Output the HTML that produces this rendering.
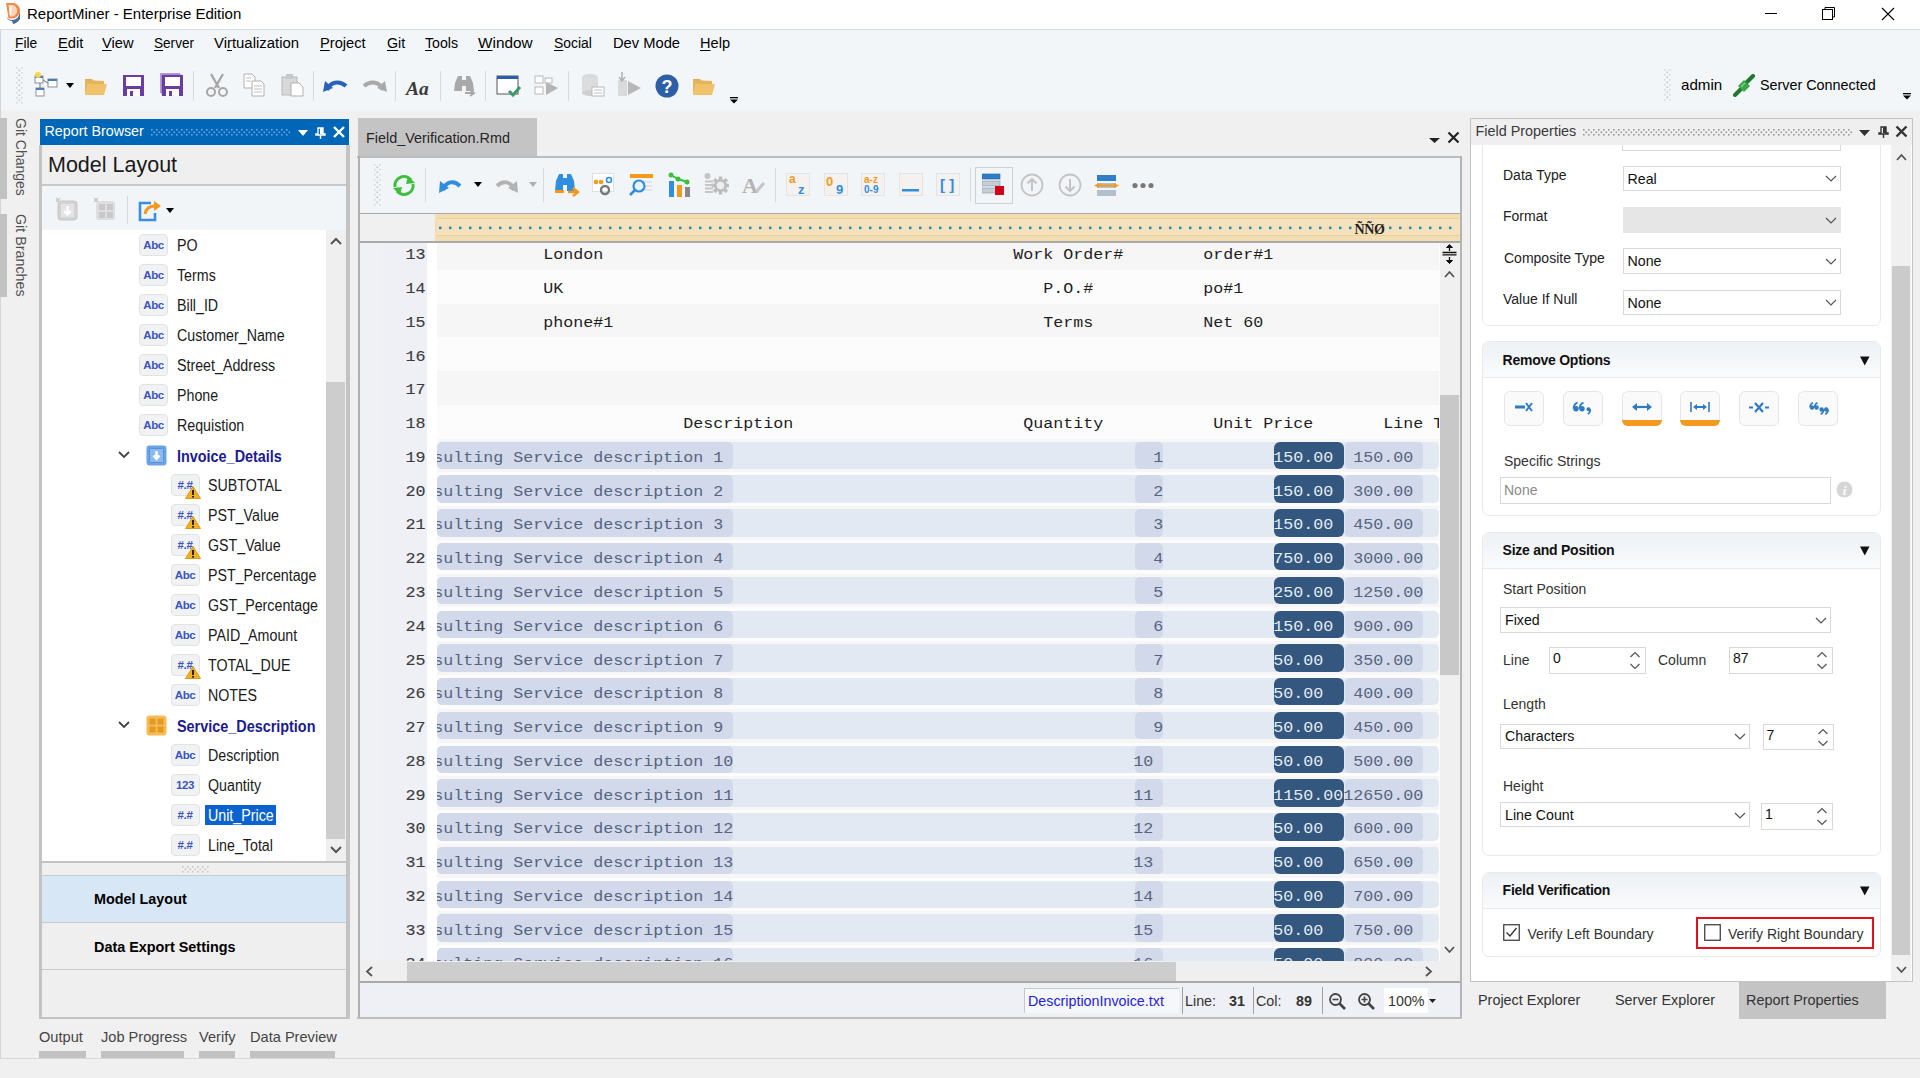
<!DOCTYPE html><html><head><meta charset="utf-8"><style>
html,body{margin:0;padding:0;}
body{width:1920px;height:1078px;overflow:hidden;position:relative;background:#f0f0f0;font-family:'Liberation Sans',sans-serif;}
body div{position:absolute;box-sizing:border-box;}
u{text-decoration:underline;text-underline-offset:2px;}
</style></head><body>
<div style="left:0px;top:0px;width:1920px;height:29px;background:#ffffff;"></div>
<div style="left:0px;top:29px;width:1920px;height:1px;background:#d8dce1;"></div>
<svg style="position:absolute;left:4px;top:2px;" width="16" height="22" viewBox="0 0 16 22"><path d="M2.5 14 C3 18 8 19 12 17 C15 15 16 12 15 8 L17 9 C18 14 16 19 11 21.5 L9 22 L8 19 C5 18.5 2.5 17 2.5 14 Z" fill="#2f5d92" opacity="0.9"/><path d="M2 1 L10 1 C14 2 16.5 6 16 10 C15 13 13 15.5 9.5 16.5 L4.5 16.5 Z" fill="#f0894a"/><path d="M4.5 3 L9.5 3 C12 4 13.5 7 13 10 C12.5 12 11 14 9 14.5 L6 14.5 Z" fill="#fbd3b8"/><path d="M5 4 L8 4 L7 13 L5.5 13 Z" fill="#ffffff" opacity="0.8"/></svg>
<div style="left:27px;top:6.34px;font-family:'Liberation Sans', sans-serif;font-size:15px;line-height:15px;color:#000;font-weight:normal;white-space:pre;">ReportMiner - Enterprise Edition</div>
<div style="left:1765px;top:13px;width:12px;height:1px;background:#000;"></div>
<svg style="position:absolute;left:1822px;top:7px;" width="14" height="14" viewBox="0 0 14 14"><rect x="0.5" y="2.5" width="10" height="10" fill="none" stroke="#000"/><path d="M3 2.5 V0.5 H12.5 V10 H10.5" fill="none" stroke="#000"/></svg>
<svg style="position:absolute;left:1881px;top:7px;" width="14" height="14" viewBox="0 0 14 14"><path d="M1 1 L13 13 M13 1 L1 13" stroke="#000" stroke-width="1.1"/></svg>
<div style="left:0px;top:30px;width:1920px;height:80px;background:#f2f6f9;"></div>
<div style="left:0px;top:110px;width:1920px;height:8px;background:#f0f0f0;"></div>
<div style="left:15px;top:36.23px;font-family:'Liberation Sans', sans-serif;font-size:14.9px;line-height:14.9px;color:#000;font-weight:normal;white-space:pre;transform:scaleX(0.927);transform-origin:0 0;"><u>F</u>ile</div>
<div style="left:57.5px;top:36.23px;font-family:'Liberation Sans', sans-serif;font-size:14.9px;line-height:14.9px;color:#000;font-weight:normal;white-space:pre;transform:scaleX(0.985);transform-origin:0 0;"><u>E</u>dit</div>
<div style="left:102px;top:36.23px;font-family:'Liberation Sans', sans-serif;font-size:14.9px;line-height:14.9px;color:#000;font-weight:normal;white-space:pre;transform:scaleX(0.984);transform-origin:0 0;"><u>V</u>iew</div>
<div style="left:153.5px;top:36.23px;font-family:'Liberation Sans', sans-serif;font-size:14.9px;line-height:14.9px;color:#000;font-weight:normal;white-space:pre;transform:scaleX(0.912);transform-origin:0 0;"><u>S</u>erver</div>
<div style="left:214px;top:36.23px;font-family:'Liberation Sans', sans-serif;font-size:14.9px;line-height:14.9px;color:#000;font-weight:normal;white-space:pre;transform:scaleX(1.0);transform-origin:0 0;">Vi<u>r</u>tualization</div>
<div style="left:320.4px;top:36.23px;font-family:'Liberation Sans', sans-serif;font-size:14.9px;line-height:14.9px;color:#000;font-weight:normal;white-space:pre;transform:scaleX(0.983);transform-origin:0 0;"><u>P</u>roject</div>
<div style="left:386.5px;top:36.23px;font-family:'Liberation Sans', sans-serif;font-size:14.9px;line-height:14.9px;color:#000;font-weight:normal;white-space:pre;transform:scaleX(0.956);transform-origin:0 0;"><u>G</u>it</div>
<div style="left:425px;top:36.23px;font-family:'Liberation Sans', sans-serif;font-size:14.9px;line-height:14.9px;color:#000;font-weight:normal;white-space:pre;transform:scaleX(0.949);transform-origin:0 0;"><u>T</u>ools</div>
<div style="left:478.4px;top:36.23px;font-family:'Liberation Sans', sans-serif;font-size:14.9px;line-height:14.9px;color:#000;font-weight:normal;white-space:pre;transform:scaleX(1.03);transform-origin:0 0;"><u>W</u>indow</div>
<div style="left:553.8px;top:36.23px;font-family:'Liberation Sans', sans-serif;font-size:14.9px;line-height:14.9px;color:#000;font-weight:normal;white-space:pre;transform:scaleX(0.934);transform-origin:0 0;"><u>S</u>ocial</div>
<div style="left:612.5px;top:36.23px;font-family:'Liberation Sans', sans-serif;font-size:14.9px;line-height:14.9px;color:#000;font-weight:normal;white-space:pre;transform:scaleX(0.987);transform-origin:0 0;">Dev Mode</div>
<div style="left:700px;top:36.23px;font-family:'Liberation Sans', sans-serif;font-size:14.9px;line-height:14.9px;color:#000;font-weight:normal;white-space:pre;transform:scaleX(0.979);transform-origin:0 0;"><u>H</u>elp</div>
<svg style="position:absolute;left:16.3px;top:66.6px;" width="7" height="37" viewBox="0 0 7 37"><rect x="0" y="0" width="1.6" height="1.6" fill="#d6d9dc"/><rect x="5" y="0" width="1.6" height="1.6" fill="#d6d9dc"/><rect x="0" y="5" width="1.6" height="1.6" fill="#d6d9dc"/><rect x="5" y="5" width="1.6" height="1.6" fill="#d6d9dc"/><rect x="0" y="10" width="1.6" height="1.6" fill="#d6d9dc"/><rect x="5" y="10" width="1.6" height="1.6" fill="#d6d9dc"/><rect x="0" y="15" width="1.6" height="1.6" fill="#d6d9dc"/><rect x="5" y="15" width="1.6" height="1.6" fill="#d6d9dc"/><rect x="0" y="20" width="1.6" height="1.6" fill="#d6d9dc"/><rect x="5" y="20" width="1.6" height="1.6" fill="#d6d9dc"/><rect x="0" y="25" width="1.6" height="1.6" fill="#d6d9dc"/><rect x="5" y="25" width="1.6" height="1.6" fill="#d6d9dc"/><rect x="0" y="30" width="1.6" height="1.6" fill="#d6d9dc"/><rect x="5" y="30" width="1.6" height="1.6" fill="#d6d9dc"/><rect x="0" y="35" width="1.6" height="1.6" fill="#d6d9dc"/><rect x="5" y="35" width="1.6" height="1.6" fill="#d6d9dc"/><rect x="2.5" y="2.5" width="1.6" height="1.6" fill="#c2c5c8"/><rect x="2.5" y="7.5" width="1.6" height="1.6" fill="#c2c5c8"/><rect x="2.5" y="12.5" width="1.6" height="1.6" fill="#c2c5c8"/><rect x="2.5" y="17.5" width="1.6" height="1.6" fill="#c2c5c8"/><rect x="2.5" y="22.5" width="1.6" height="1.6" fill="#c2c5c8"/><rect x="2.5" y="27.5" width="1.6" height="1.6" fill="#c2c5c8"/><rect x="2.5" y="32.5" width="1.6" height="1.6" fill="#c2c5c8"/></svg>
<svg style="position:absolute;left:34px;top:72px;" width="24" height="25" viewBox="0 0 24 25"><rect x="1" y="4" width="8" height="7" fill="#fff" stroke="#8a9099"/><rect x="1" y="4" width="8" height="2" fill="#4a7cc0"/>
<circle cx="4" cy="3" r="3" fill="#f6d64a"/>
<rect x="14" y="7" width="9" height="8" fill="#fff" stroke="#8a9099"/><rect x="14" y="7" width="9" height="2" fill="#4a7cc0"/>
<rect x="2" y="16" width="8" height="8" fill="#fff" stroke="#8a9099"/><rect x="2" y="16" width="8" height="2" fill="#4a7cc0"/>
<path d="M9 8 L14 11 M6 11 V16" stroke="#6a7078" fill="none"/></svg>
<svg style="position:absolute;left:66px;top:83px;" width="9" height="6" viewBox="0 0 9 6"><path d="M0 0 H8 L4 5 Z" fill="#000"/></svg>
<svg style="position:absolute;left:84px;top:75px;" width="24" height="22" viewBox="0 0 24 22"><path d="M1 4 H8 L10 6 H20 V9 H1 Z" fill="#e2ad52"/><path d="M1 20 L4 9 H23 L20 20 Z" fill="#f0c26a"/><path d="M1 5 V20 L4 9 H20 V6" fill="#e6b45c"/></svg>
<svg style="position:absolute;left:122px;top:74px;" width="23" height="23" viewBox="0 0 23 23"><path d="M1 1 H22 V22 H1 Z" fill="#6a3ea1"/><rect x="4" y="3" width="15" height="9" fill="#fff"/><rect x="5" y="15" width="13" height="7" fill="#fff"/><rect x="8" y="17" width="3" height="5" fill="#6a3ea1"/></svg>
<svg style="position:absolute;left:160px;top:73px;" width="24" height="24" viewBox="0 0 24 24"><rect x="0" y="0" width="20" height="20" fill="#b59ad6"/><rect x="1.5" y="1.5" width="20" height="20" fill="#9a78c8"/></svg>
<svg style="position:absolute;left:161px;top:74px;" width="23" height="23" viewBox="0 0 23 23"><path d="M1 1 H22 V22 H1 Z" fill="#6a3ea1"/><rect x="4" y="3" width="15" height="9" fill="#fff"/><rect x="5" y="15" width="13" height="7" fill="#fff"/><rect x="8" y="17" width="3" height="5" fill="#6a3ea1"/></svg>
<div style="left:193px;top:71px;width:1px;height:30px;background:#d6d9dd;"></div>
<svg style="position:absolute;left:205px;top:73px;" width="24" height="24" viewBox="0 0 24 24"><path d="M6 1 L14 15 M18 1 L10 15" stroke="#a7a7a7" stroke-width="2.4"/><circle cx="6" cy="19" r="4" fill="none" stroke="#a7a7a7" stroke-width="2"/><circle cx="18" cy="19" r="4" fill="none" stroke="#a7a7a7" stroke-width="2"/></svg>
<svg style="position:absolute;left:243px;top:73px;" width="23" height="24" viewBox="0 0 23 24"><path d="M1 1 H9 L12 4 V15 H1 Z" fill="#fff" stroke="#b0b0b0"/><path d="M9 8 H18 L21 11 V23 H9 Z" fill="#fff" stroke="#b0b0b0"/><path d="M11 13 H19 M11 16 H19 M11 19 H19 M3 5 H8 M3 8 H8" stroke="#c0c0c0"/></svg>
<svg style="position:absolute;left:281px;top:73px;" width="23" height="24" viewBox="0 0 23 24"><rect x="1" y="4" width="15" height="18" fill="#d8d8d8" stroke="#b8b8b8"/><rect x="5" y="1" width="7" height="5" fill="#c8c8c8"/><path d="M10 10 H18 L22 14 V23 H10 Z" fill="#fff" stroke="#b0b0b0"/></svg>
<div style="left:313px;top:71px;width:1px;height:30px;background:#d6d9dd;"></div>
<svg style="position:absolute;left:323px;top:76px;" width="25" height="18" viewBox="0 0 25 18"><path d="M4 14 C7 6 16 4 23 10" stroke="#2a62b8" stroke-width="4.2" fill="none"/><path d="M0 16 L2 5 L10 12 Z" fill="#2a62b8"/></svg>
<svg style="position:absolute;left:362px;top:76px;" width="25" height="18" viewBox="0 0 25 18"><path d="M21 14 C18 6 9 4 2 10" stroke="#a9a9a9" stroke-width="4.2" fill="none"/><path d="M25 16 L23 5 L15 12 Z" fill="#a9a9a9"/></svg>
<div style="left:395px;top:71px;width:1px;height:30px;background:#d6d9dd;"></div>
<div style="left:406px;top:79.32px;font-family:'Liberation Serif', serif;font-size:19.5px;line-height:19.5px;color:#3a3a3a;font-weight:bold;white-space:pre;font-style:italic;">Aa</div>
<div style="left:440px;top:71px;width:1px;height:30px;background:#d6d9dd;"></div>
<svg style="position:absolute;left:453px;top:75px;" width="24" height="22" viewBox="0 0 24 22"><path d="M2 8 L5 1 H9 V16 H1 Z M13 1 H17 L20 8 L21 16 H13 Z" fill="#a9a9a9"/><rect x="8" y="5" width="6" height="6" fill="#a9a9a9"/><path d="M12 18 H20 M17 15 L21 18 L17 21" stroke="#a9a9a9" stroke-width="2" fill="none"/></svg>
<div style="left:485px;top:71px;width:1px;height:30px;background:#d6d9dd;"></div>
<svg style="position:absolute;left:496px;top:74px;" width="26" height="24" viewBox="0 0 26 24"><rect x="1" y="2" width="21" height="18" fill="#fff" stroke="#555"/><rect x="1" y="2" width="21" height="3" fill="#2a5eaa"/><path d="M13 17 L17 21 L24 13" stroke="#3a9a6a" stroke-width="3" fill="none"/></svg>
<svg style="position:absolute;left:534px;top:74px;" width="25" height="23" viewBox="0 0 25 23"><rect x="1" y="2" width="8" height="7" fill="#fff" stroke="#b8b8b8"/><rect x="1" y="13" width="8" height="7" fill="#fff" stroke="#b8b8b8"/><rect x="11" y="4" width="7" height="5" fill="#fff" stroke="#b8b8b8"/><path d="M12 8 L24 14 L12 21 Z" fill="#b5b5b5"/></svg>
<div style="left:568px;top:71px;width:1px;height:30px;background:#d6d9dd;"></div>
<svg style="position:absolute;left:581px;top:73px;" width="24" height="25" viewBox="0 0 24 25"><ellipse cx="9" cy="4" rx="8" ry="3" fill="#d8d8d8"/><rect x="1" y="4" width="16" height="16" fill="#dcdcdc"/><ellipse cx="9" cy="20" rx="8" ry="3" fill="#d0d0d0"/><rect x="11" y="14" width="12" height="9" fill="#fff" stroke="#b8b8b8"/><path d="M13 17 H21 M13 20 H21" stroke="#c0c0c0"/></svg>
<svg style="position:absolute;left:617px;top:72px;" width="25" height="25" viewBox="0 0 25 25"><rect x="1" y="8" width="9" height="16" fill="#dadada"/><path d="M5 0 V8 M2 5 L5 9 L8 5" stroke="#b0b0b0" stroke-width="1.5" fill="none"/><path d="M11 9 L24 16 L11 23 Z" fill="#b8b8b8"/></svg>
<svg style="position:absolute;left:655px;top:74px;" width="24" height="24" viewBox="0 0 24 24"><circle cx="12" cy="12" r="11.5" fill="#2c5fa6"/><text x="12" y="18.5" text-anchor="middle" font-family="Liberation Sans" font-weight="bold" font-size="18" fill="#fff">?</text></svg>
<svg style="position:absolute;left:692px;top:75px;" width="24" height="22" viewBox="0 0 24 22"><path d="M1 4 H8 L10 6 H20 V9 H1 Z" fill="#e2ad52"/><path d="M1 20 L4 9 H23 L20 20 Z" fill="#f0c26a"/><path d="M1 5 V20 L4 9 H20 V6" fill="#e6b45c"/></svg>
<svg style="position:absolute;left:730px;top:97px;" width="9" height="7" viewBox="0 0 9 7"><rect x="0" y="0" width="8" height="1.3" fill="#000"/><path d="M0 2.5 H8 L4 6.5 Z" fill="#000"/></svg>
<svg style="position:absolute;left:1664px;top:69px;" width="7" height="34" viewBox="0 0 7 34"><rect x="0" y="0" width="1.6" height="1.6" fill="#d6d9dc"/><rect x="5" y="0" width="1.6" height="1.6" fill="#d6d9dc"/><rect x="0" y="5" width="1.6" height="1.6" fill="#d6d9dc"/><rect x="5" y="5" width="1.6" height="1.6" fill="#d6d9dc"/><rect x="0" y="10" width="1.6" height="1.6" fill="#d6d9dc"/><rect x="5" y="10" width="1.6" height="1.6" fill="#d6d9dc"/><rect x="0" y="15" width="1.6" height="1.6" fill="#d6d9dc"/><rect x="5" y="15" width="1.6" height="1.6" fill="#d6d9dc"/><rect x="0" y="20" width="1.6" height="1.6" fill="#d6d9dc"/><rect x="5" y="20" width="1.6" height="1.6" fill="#d6d9dc"/><rect x="0" y="25" width="1.6" height="1.6" fill="#d6d9dc"/><rect x="5" y="25" width="1.6" height="1.6" fill="#d6d9dc"/><rect x="0" y="30" width="1.6" height="1.6" fill="#d6d9dc"/><rect x="5" y="30" width="1.6" height="1.6" fill="#d6d9dc"/><rect x="2.5" y="2.5" width="1.6" height="1.6" fill="#c2c5c8"/><rect x="2.5" y="7.5" width="1.6" height="1.6" fill="#c2c5c8"/><rect x="2.5" y="12.5" width="1.6" height="1.6" fill="#c2c5c8"/><rect x="2.5" y="17.5" width="1.6" height="1.6" fill="#c2c5c8"/><rect x="2.5" y="22.5" width="1.6" height="1.6" fill="#c2c5c8"/><rect x="2.5" y="27.5" width="1.6" height="1.6" fill="#c2c5c8"/></svg>
<div style="left:1680.5px;top:78.34px;font-family:'Liberation Sans', sans-serif;font-size:14.3px;line-height:14.3px;color:#000;font-weight:normal;white-space:pre;transform:scaleX(1.06);transform-origin:0 0;">admin</div>
<svg style="position:absolute;left:1732px;top:74px;" width="24" height="23" viewBox="0 0 24 23"><path d="M3 21 L9 15" stroke="#1f7a30" stroke-width="4" stroke-linecap="round"/><path d="M15 8 L21 2" stroke="#1f7a30" stroke-width="4" stroke-linecap="round"/><path d="M6 12 L12 6 L18 12 L12 18 Z" fill="#3aa64a"/><path d="M9 13 L13 9" stroke="#7ed07e" stroke-width="1.5"/></svg>
<div style="left:1760px;top:78.30px;font-family:'Liberation Sans', sans-serif;font-size:14.35px;line-height:14.35px;color:#000;font-weight:normal;white-space:pre;">Server Connected</div>
<svg style="position:absolute;left:1903px;top:93px;" width="9" height="8" viewBox="0 0 9 8"><rect x="0" y="0" width="8" height="1.3" fill="#000"/><path d="M0 2.5 H8 L4 6.5 Z" fill="#000"/></svg>
<div style="left:0px;top:30px;width:1px;height:1028px;background:#d4d4d4;"></div>
<div style="left:0px;top:118px;width:7px;height:81px;background:#c2c2c2;"></div>
<div style="left:0px;top:214px;width:7px;height:83px;background:#c2c2c2;"></div>
<div style="left:13px;top:118px;width:16px;height:80px;"><div style="left:0;top:0;width:80px;height:16px;transform-origin:0 0;transform:translate(16px,0) rotate(90deg);font-size:14px;line-height:16px;color:#505050;white-space:pre;">Git Changes</div></div>
<div style="left:13px;top:214px;width:16px;height:84px;"><div style="left:0;top:0;width:84px;height:16px;transform-origin:0 0;transform:translate(16px,0) rotate(90deg);font-size:14.3px;line-height:16px;color:#505050;white-space:pre;">Git Branches</div></div>
<div style="left:39px;top:145px;width:311px;height:874px;background:#efefef;border:2px solid #c3c3c3;border-left-width:3px;border-right-width:4px;border-top:none;"></div>
<div style="left:40px;top:119px;width:309px;height:26px;background:#0067b8;"></div>
<div style="left:44.5px;top:124.14px;font-family:'Liberation Sans', sans-serif;font-size:14.3px;line-height:14.3px;color:#ffffff;font-weight:normal;white-space:pre;">Report Browser</div>
<svg style="position:absolute;left:151px;top:129px;" width="140" height="8" viewBox="0 0 140 8"><rect x="0" y="0.0" width="1.6" height="1.6" fill="#6aa6dc"/><rect x="5" y="0.0" width="1.6" height="1.6" fill="#6aa6dc"/><rect x="10" y="0.0" width="1.6" height="1.6" fill="#6aa6dc"/><rect x="15" y="0.0" width="1.6" height="1.6" fill="#6aa6dc"/><rect x="20" y="0.0" width="1.6" height="1.6" fill="#6aa6dc"/><rect x="25" y="0.0" width="1.6" height="1.6" fill="#6aa6dc"/><rect x="30" y="0.0" width="1.6" height="1.6" fill="#6aa6dc"/><rect x="35" y="0.0" width="1.6" height="1.6" fill="#6aa6dc"/><rect x="40" y="0.0" width="1.6" height="1.6" fill="#6aa6dc"/><rect x="45" y="0.0" width="1.6" height="1.6" fill="#6aa6dc"/><rect x="50" y="0.0" width="1.6" height="1.6" fill="#6aa6dc"/><rect x="55" y="0.0" width="1.6" height="1.6" fill="#6aa6dc"/><rect x="60" y="0.0" width="1.6" height="1.6" fill="#6aa6dc"/><rect x="65" y="0.0" width="1.6" height="1.6" fill="#6aa6dc"/><rect x="70" y="0.0" width="1.6" height="1.6" fill="#6aa6dc"/><rect x="75" y="0.0" width="1.6" height="1.6" fill="#6aa6dc"/><rect x="80" y="0.0" width="1.6" height="1.6" fill="#6aa6dc"/><rect x="85" y="0.0" width="1.6" height="1.6" fill="#6aa6dc"/><rect x="90" y="0.0" width="1.6" height="1.6" fill="#6aa6dc"/><rect x="95" y="0.0" width="1.6" height="1.6" fill="#6aa6dc"/><rect x="100" y="0.0" width="1.6" height="1.6" fill="#6aa6dc"/><rect x="105" y="0.0" width="1.6" height="1.6" fill="#6aa6dc"/><rect x="110" y="0.0" width="1.6" height="1.6" fill="#6aa6dc"/><rect x="115" y="0.0" width="1.6" height="1.6" fill="#6aa6dc"/><rect x="120" y="0.0" width="1.6" height="1.6" fill="#6aa6dc"/><rect x="125" y="0.0" width="1.6" height="1.6" fill="#6aa6dc"/><rect x="130" y="0.0" width="1.6" height="1.6" fill="#6aa6dc"/><rect x="135" y="0.0" width="1.6" height="1.6" fill="#6aa6dc"/><rect x="2.5" y="2.5" width="1.6" height="1.6" fill="#6aa6dc"/><rect x="7.5" y="2.5" width="1.6" height="1.6" fill="#6aa6dc"/><rect x="12.5" y="2.5" width="1.6" height="1.6" fill="#6aa6dc"/><rect x="17.5" y="2.5" width="1.6" height="1.6" fill="#6aa6dc"/><rect x="22.5" y="2.5" width="1.6" height="1.6" fill="#6aa6dc"/><rect x="27.5" y="2.5" width="1.6" height="1.6" fill="#6aa6dc"/><rect x="32.5" y="2.5" width="1.6" height="1.6" fill="#6aa6dc"/><rect x="37.5" y="2.5" width="1.6" height="1.6" fill="#6aa6dc"/><rect x="42.5" y="2.5" width="1.6" height="1.6" fill="#6aa6dc"/><rect x="47.5" y="2.5" width="1.6" height="1.6" fill="#6aa6dc"/><rect x="52.5" y="2.5" width="1.6" height="1.6" fill="#6aa6dc"/><rect x="57.5" y="2.5" width="1.6" height="1.6" fill="#6aa6dc"/><rect x="62.5" y="2.5" width="1.6" height="1.6" fill="#6aa6dc"/><rect x="67.5" y="2.5" width="1.6" height="1.6" fill="#6aa6dc"/><rect x="72.5" y="2.5" width="1.6" height="1.6" fill="#6aa6dc"/><rect x="77.5" y="2.5" width="1.6" height="1.6" fill="#6aa6dc"/><rect x="82.5" y="2.5" width="1.6" height="1.6" fill="#6aa6dc"/><rect x="87.5" y="2.5" width="1.6" height="1.6" fill="#6aa6dc"/><rect x="92.5" y="2.5" width="1.6" height="1.6" fill="#6aa6dc"/><rect x="97.5" y="2.5" width="1.6" height="1.6" fill="#6aa6dc"/><rect x="102.5" y="2.5" width="1.6" height="1.6" fill="#6aa6dc"/><rect x="107.5" y="2.5" width="1.6" height="1.6" fill="#6aa6dc"/><rect x="112.5" y="2.5" width="1.6" height="1.6" fill="#6aa6dc"/><rect x="117.5" y="2.5" width="1.6" height="1.6" fill="#6aa6dc"/><rect x="122.5" y="2.5" width="1.6" height="1.6" fill="#6aa6dc"/><rect x="127.5" y="2.5" width="1.6" height="1.6" fill="#6aa6dc"/><rect x="132.5" y="2.5" width="1.6" height="1.6" fill="#6aa6dc"/><rect x="137.5" y="2.5" width="1.6" height="1.6" fill="#6aa6dc"/><rect x="0" y="5.0" width="1.6" height="1.6" fill="#6aa6dc"/><rect x="5" y="5.0" width="1.6" height="1.6" fill="#6aa6dc"/><rect x="10" y="5.0" width="1.6" height="1.6" fill="#6aa6dc"/><rect x="15" y="5.0" width="1.6" height="1.6" fill="#6aa6dc"/><rect x="20" y="5.0" width="1.6" height="1.6" fill="#6aa6dc"/><rect x="25" y="5.0" width="1.6" height="1.6" fill="#6aa6dc"/><rect x="30" y="5.0" width="1.6" height="1.6" fill="#6aa6dc"/><rect x="35" y="5.0" width="1.6" height="1.6" fill="#6aa6dc"/><rect x="40" y="5.0" width="1.6" height="1.6" fill="#6aa6dc"/><rect x="45" y="5.0" width="1.6" height="1.6" fill="#6aa6dc"/><rect x="50" y="5.0" width="1.6" height="1.6" fill="#6aa6dc"/><rect x="55" y="5.0" width="1.6" height="1.6" fill="#6aa6dc"/><rect x="60" y="5.0" width="1.6" height="1.6" fill="#6aa6dc"/><rect x="65" y="5.0" width="1.6" height="1.6" fill="#6aa6dc"/><rect x="70" y="5.0" width="1.6" height="1.6" fill="#6aa6dc"/><rect x="75" y="5.0" width="1.6" height="1.6" fill="#6aa6dc"/><rect x="80" y="5.0" width="1.6" height="1.6" fill="#6aa6dc"/><rect x="85" y="5.0" width="1.6" height="1.6" fill="#6aa6dc"/><rect x="90" y="5.0" width="1.6" height="1.6" fill="#6aa6dc"/><rect x="95" y="5.0" width="1.6" height="1.6" fill="#6aa6dc"/><rect x="100" y="5.0" width="1.6" height="1.6" fill="#6aa6dc"/><rect x="105" y="5.0" width="1.6" height="1.6" fill="#6aa6dc"/><rect x="110" y="5.0" width="1.6" height="1.6" fill="#6aa6dc"/><rect x="115" y="5.0" width="1.6" height="1.6" fill="#6aa6dc"/><rect x="120" y="5.0" width="1.6" height="1.6" fill="#6aa6dc"/><rect x="125" y="5.0" width="1.6" height="1.6" fill="#6aa6dc"/><rect x="130" y="5.0" width="1.6" height="1.6" fill="#6aa6dc"/><rect x="135" y="5.0" width="1.6" height="1.6" fill="#6aa6dc"/></svg>
<svg style="position:absolute;left:298px;top:130px;" width="11" height="7" viewBox="0 0 11 7"><path d="M0 0 H10 L5 6 Z" fill="#fff"/></svg>
<svg style="position:absolute;left:315px;top:127px;" width="11" height="13" viewBox="0 0 11 13"><path d="M3 1 H8 V7 H10 V8 H1 V7 H3 Z M5.5 8 V12" stroke="#fff" stroke-width="1.4" fill="none"/><rect x="5" y="1" width="3" height="6" fill="#fff"/></svg>
<svg style="position:absolute;left:333px;top:126px;" width="12" height="12" viewBox="0 0 12 12"><path d="M1 1 L11 11 M11 1 L1 11" stroke="#fff" stroke-width="2.4"/></svg>
<div style="left:48px;top:154.57px;font-family:'Liberation Sans', sans-serif;font-size:21.5px;line-height:21.5px;color:#1a1a1a;font-weight:normal;white-space:pre;">Model Layout</div>
<div style="left:42px;top:184px;width:304px;height:2px;background:#c9c9c9;"></div>
<div style="left:42px;top:186px;width:304px;height:44px;background:#f2f5f8;"></div>
<svg style="position:absolute;left:55px;top:197px;" width="24" height="25" viewBox="0 0 24 25"><rect x="3" y="4" width="19" height="19" rx="3" fill="#d4d4d4" stroke="#c4c4c4"/><rect x="6" y="7" width="13" height="13" fill="#e4e4e4"/><path d="M12.5 9 V17 M9 14 L12.5 17.5 L16 14" stroke="#fff" stroke-width="2.2" fill="none"/><path d="M1 1 L5 5 M5 1 L1 5" stroke="#c8c8c8" stroke-width="1.5"/></svg>
<svg style="position:absolute;left:93px;top:197px;" width="24" height="25" viewBox="0 0 24 25"><rect x="3" y="4" width="19" height="19" rx="3" fill="#dedede"/><rect x="6" y="7" width="6" height="6" fill="#c9c9c9"/><rect x="14" y="7" width="6" height="6" fill="#c9c9c9"/><rect x="6" y="15" width="6" height="6" fill="#c9c9c9"/><rect x="14" y="15" width="6" height="6" fill="#c9c9c9"/><path d="M1 1 L5 5 M5 1 L1 5" stroke="#c8c8c8" stroke-width="1.5"/></svg>
<div style="left:127px;top:196px;width:1px;height:28px;background:#d8d8d8;"></div>
<svg style="position:absolute;left:138px;top:199px;" width="24" height="23" viewBox="0 0 24 23"><path d="M13 4 H2 V21 H17 V14" stroke="#3a8de0" stroke-width="2.6" fill="none"/><path d="M7 15 C8 9 12 7 17 7" stroke="#f39a1e" stroke-width="3" fill="none"/><path d="M16 2 L23 7 L16 12 Z" fill="#f39a1e"/></svg>
<svg style="position:absolute;left:166px;top:208px;" width="9" height="6" viewBox="0 0 9 6"><path d="M0 0 H8 L4 5 Z" fill="#000"/></svg>
<div style="left:42px;top:230px;width:284px;height:631px;background:#ffffff;"></div>
<div style="left:326px;top:230px;width:20px;height:631px;background:#efefef;"></div>
<div style="left:326px;top:382px;width:19px;height:457px;background:#cdcdcd;"></div>
<svg style="position:absolute;left:330px;top:237px;" width="12" height="8" viewBox="0 0 12 8"><path d="M1 7 L6 2 L11 7" stroke="#555" stroke-width="2" fill="none"/></svg>
<svg style="position:absolute;left:330px;top:846px;" width="12" height="8" viewBox="0 0 12 8"><path d="M1 1 L6 6 L11 1" stroke="#555" stroke-width="2" fill="none"/></svg>
<div style="left:42px;top:861px;width:304px;height:2px;background:#c3c3c3;"></div>
<svg style="position:absolute;left:182px;top:866px;" width="29" height="8" viewBox="0 0 29 8"><rect x="0" y="0.0" width="1.6" height="1.6" fill="#c8c8c8"/><rect x="5" y="0.0" width="1.6" height="1.6" fill="#c8c8c8"/><rect x="10" y="0.0" width="1.6" height="1.6" fill="#c8c8c8"/><rect x="15" y="0.0" width="1.6" height="1.6" fill="#c8c8c8"/><rect x="20" y="0.0" width="1.6" height="1.6" fill="#c8c8c8"/><rect x="25" y="0.0" width="1.6" height="1.6" fill="#c8c8c8"/><rect x="2.5" y="2.5" width="1.6" height="1.6" fill="#c8c8c8"/><rect x="7.5" y="2.5" width="1.6" height="1.6" fill="#c8c8c8"/><rect x="12.5" y="2.5" width="1.6" height="1.6" fill="#c8c8c8"/><rect x="17.5" y="2.5" width="1.6" height="1.6" fill="#c8c8c8"/><rect x="22.5" y="2.5" width="1.6" height="1.6" fill="#c8c8c8"/><rect x="0" y="5.0" width="1.6" height="1.6" fill="#c8c8c8"/><rect x="5" y="5.0" width="1.6" height="1.6" fill="#c8c8c8"/><rect x="10" y="5.0" width="1.6" height="1.6" fill="#c8c8c8"/><rect x="15" y="5.0" width="1.6" height="1.6" fill="#c8c8c8"/><rect x="20" y="5.0" width="1.6" height="1.6" fill="#c8c8c8"/><rect x="25" y="5.0" width="1.6" height="1.6" fill="#c8c8c8"/></svg>
<div style="left:42px;top:875px;width:304px;height:1px;background:#cbcbcb;"></div>
<div style="left:42px;top:876px;width:304px;height:46px;background:#d7e7f6;"></div>
<div style="left:42px;top:922px;width:304px;height:1px;background:#c9c9c9;"></div>
<div style="left:94px;top:892.16px;font-family:'Liberation Sans', sans-serif;font-size:14.4px;line-height:14.4px;color:#000;font-weight:bold;white-space:pre;">Model Layout</div>
<div style="left:42px;top:969px;width:304px;height:1px;background:#c9c9c9;"></div>
<div style="left:94px;top:939.66px;font-family:'Liberation Sans', sans-serif;font-size:14.4px;line-height:14.4px;color:#000;font-weight:bold;white-space:pre;">Data Export Settings</div>
<div style="left:139px;top:234.39999999999998px;width:29px;height:22px;border-radius:4px;background:#f1f2f4;border:1px solid #e1e3e6;"></div>
<div style="left:139px;top:237.39999999999998px;width:29px;height:16px;font-size:11.5px;line-height:16px;font-weight:bold;color:#3b55bd;text-align:center;letter-spacing:-0.4px;">Abc</div>
<div style="left:176.5px;top:238.49px;font-family:'Liberation Sans', sans-serif;font-size:16px;line-height:16px;color:#1a1a1a;font-weight:normal;white-space:pre;transform:scaleX(0.89);transform-origin:0 0;">PO</div>
<div style="left:139px;top:264.4px;width:29px;height:22px;border-radius:4px;background:#f1f2f4;border:1px solid #e1e3e6;"></div>
<div style="left:139px;top:267.4px;width:29px;height:16px;font-size:11.5px;line-height:16px;font-weight:bold;color:#3b55bd;text-align:center;letter-spacing:-0.4px;">Abc</div>
<div style="left:176.5px;top:268.49px;font-family:'Liberation Sans', sans-serif;font-size:16px;line-height:16px;color:#1a1a1a;font-weight:normal;white-space:pre;transform:scaleX(0.89);transform-origin:0 0;">Terms</div>
<div style="left:139px;top:294.4px;width:29px;height:22px;border-radius:4px;background:#f1f2f4;border:1px solid #e1e3e6;"></div>
<div style="left:139px;top:297.4px;width:29px;height:16px;font-size:11.5px;line-height:16px;font-weight:bold;color:#3b55bd;text-align:center;letter-spacing:-0.4px;">Abc</div>
<div style="left:176.5px;top:298.49px;font-family:'Liberation Sans', sans-serif;font-size:16px;line-height:16px;color:#1a1a1a;font-weight:normal;white-space:pre;transform:scaleX(0.89);transform-origin:0 0;">Bill_ID</div>
<div style="left:139px;top:324.4px;width:29px;height:22px;border-radius:4px;background:#f1f2f4;border:1px solid #e1e3e6;"></div>
<div style="left:139px;top:327.4px;width:29px;height:16px;font-size:11.5px;line-height:16px;font-weight:bold;color:#3b55bd;text-align:center;letter-spacing:-0.4px;">Abc</div>
<div style="left:176.5px;top:328.49px;font-family:'Liberation Sans', sans-serif;font-size:16px;line-height:16px;color:#1a1a1a;font-weight:normal;white-space:pre;transform:scaleX(0.89);transform-origin:0 0;">Customer_Name</div>
<div style="left:139px;top:354.4px;width:29px;height:22px;border-radius:4px;background:#f1f2f4;border:1px solid #e1e3e6;"></div>
<div style="left:139px;top:357.4px;width:29px;height:16px;font-size:11.5px;line-height:16px;font-weight:bold;color:#3b55bd;text-align:center;letter-spacing:-0.4px;">Abc</div>
<div style="left:176.5px;top:358.49px;font-family:'Liberation Sans', sans-serif;font-size:16px;line-height:16px;color:#1a1a1a;font-weight:normal;white-space:pre;transform:scaleX(0.89);transform-origin:0 0;">Street_Address</div>
<div style="left:139px;top:384.4px;width:29px;height:22px;border-radius:4px;background:#f1f2f4;border:1px solid #e1e3e6;"></div>
<div style="left:139px;top:387.4px;width:29px;height:16px;font-size:11.5px;line-height:16px;font-weight:bold;color:#3b55bd;text-align:center;letter-spacing:-0.4px;">Abc</div>
<div style="left:176.5px;top:388.49px;font-family:'Liberation Sans', sans-serif;font-size:16px;line-height:16px;color:#1a1a1a;font-weight:normal;white-space:pre;transform:scaleX(0.89);transform-origin:0 0;">Phone</div>
<div style="left:139px;top:414.4px;width:29px;height:22px;border-radius:4px;background:#f1f2f4;border:1px solid #e1e3e6;"></div>
<div style="left:139px;top:417.4px;width:29px;height:16px;font-size:11.5px;line-height:16px;font-weight:bold;color:#3b55bd;text-align:center;letter-spacing:-0.4px;">Abc</div>
<div style="left:176.5px;top:418.49px;font-family:'Liberation Sans', sans-serif;font-size:16px;line-height:16px;color:#1a1a1a;font-weight:normal;white-space:pre;transform:scaleX(0.89);transform-origin:0 0;">Requistion</div>
<svg style="position:absolute;left:118px;top:451.2px;" width="12" height="8" viewBox="0 0 12 8"><path d="M1 1 L6 6 L11 1" stroke="#444" stroke-width="1.8" fill="none"/></svg>
<svg style="position:absolute;left:146px;top:445.2px;" width="21" height="21" viewBox="0 0 21 21"><rect x="0.5" y="0.5" width="20" height="20" rx="3" fill="#6ba4e6"/><rect x="3.5" y="3.5" width="14" height="14" rx="1" fill="#8bbaf0" stroke="#5a90d4"/><path d="M10.5 6 V13 M7.5 10.5 L10.5 14 L13.5 10.5" stroke="#fff" stroke-width="2.4" fill="none"/></svg>
<div style="left:176.75px;top:448.59px;font-family:'Liberation Sans', sans-serif;font-size:16px;line-height:16px;color:#1b1b8e;font-weight:bold;white-space:pre;transform:scaleX(0.9);transform-origin:0 0;">Invoice_Details</div>
<div style="left:170.5px;top:474.4px;width:29px;height:22px;border-radius:4px;background:#f1f2f4;border:1px solid #e1e3e6;"></div>
<div style="left:170.5px;top:477.4px;width:29px;height:16px;font-size:11.5px;line-height:16px;font-weight:bold;color:#3b55bd;text-align:center;letter-spacing:-0.4px;">#.#</div>
<svg style="position:absolute;left:184.5px;top:486.4px;" width="16" height="13" viewBox="0 0 16 13"><path d="M8 0.5 L15.5 12.5 H0.5 Z" fill="#f3b11c" stroke="#d08a00" stroke-width="0.8"/><rect x="7" y="4" width="2" height="5" fill="#222"/><rect x="7" y="10" width="2" height="1.6" fill="#222"/></svg>
<div style="left:207.5px;top:478.49px;font-family:'Liberation Sans', sans-serif;font-size:16px;line-height:16px;color:#1a1a1a;font-weight:normal;white-space:pre;transform:scaleX(0.89);transform-origin:0 0;">SUBTOTAL</div>
<div style="left:170.5px;top:504.40000000000003px;width:29px;height:22px;border-radius:4px;background:#f1f2f4;border:1px solid #e1e3e6;"></div>
<div style="left:170.5px;top:507.40000000000003px;width:29px;height:16px;font-size:11.5px;line-height:16px;font-weight:bold;color:#3b55bd;text-align:center;letter-spacing:-0.4px;">#.#</div>
<svg style="position:absolute;left:184.5px;top:516.4000000000001px;" width="16" height="13" viewBox="0 0 16 13"><path d="M8 0.5 L15.5 12.5 H0.5 Z" fill="#f3b11c" stroke="#d08a00" stroke-width="0.8"/><rect x="7" y="4" width="2" height="5" fill="#222"/><rect x="7" y="10" width="2" height="1.6" fill="#222"/></svg>
<div style="left:207.5px;top:508.49px;font-family:'Liberation Sans', sans-serif;font-size:16px;line-height:16px;color:#1a1a1a;font-weight:normal;white-space:pre;transform:scaleX(0.89);transform-origin:0 0;">PST_Value</div>
<div style="left:170.5px;top:534.4000000000001px;width:29px;height:22px;border-radius:4px;background:#f1f2f4;border:1px solid #e1e3e6;"></div>
<div style="left:170.5px;top:537.4000000000001px;width:29px;height:16px;font-size:11.5px;line-height:16px;font-weight:bold;color:#3b55bd;text-align:center;letter-spacing:-0.4px;">#.#</div>
<svg style="position:absolute;left:184.5px;top:546.4000000000001px;" width="16" height="13" viewBox="0 0 16 13"><path d="M8 0.5 L15.5 12.5 H0.5 Z" fill="#f3b11c" stroke="#d08a00" stroke-width="0.8"/><rect x="7" y="4" width="2" height="5" fill="#222"/><rect x="7" y="10" width="2" height="1.6" fill="#222"/></svg>
<div style="left:207.5px;top:538.49px;font-family:'Liberation Sans', sans-serif;font-size:16px;line-height:16px;color:#1a1a1a;font-weight:normal;white-space:pre;transform:scaleX(0.89);transform-origin:0 0;">GST_Value</div>
<div style="left:170.5px;top:564.4000000000001px;width:29px;height:22px;border-radius:4px;background:#f1f2f4;border:1px solid #e1e3e6;"></div>
<div style="left:170.5px;top:567.4000000000001px;width:29px;height:16px;font-size:11.5px;line-height:16px;font-weight:bold;color:#3b55bd;text-align:center;letter-spacing:-0.4px;">Abc</div>
<div style="left:207.5px;top:568.49px;font-family:'Liberation Sans', sans-serif;font-size:16px;line-height:16px;color:#1a1a1a;font-weight:normal;white-space:pre;transform:scaleX(0.89);transform-origin:0 0;">PST_Percentage</div>
<div style="left:170.5px;top:594.4000000000001px;width:29px;height:22px;border-radius:4px;background:#f1f2f4;border:1px solid #e1e3e6;"></div>
<div style="left:170.5px;top:597.4000000000001px;width:29px;height:16px;font-size:11.5px;line-height:16px;font-weight:bold;color:#3b55bd;text-align:center;letter-spacing:-0.4px;">Abc</div>
<div style="left:207.5px;top:598.49px;font-family:'Liberation Sans', sans-serif;font-size:16px;line-height:16px;color:#1a1a1a;font-weight:normal;white-space:pre;transform:scaleX(0.89);transform-origin:0 0;">GST_Percentage</div>
<div style="left:170.5px;top:624.4000000000001px;width:29px;height:22px;border-radius:4px;background:#f1f2f4;border:1px solid #e1e3e6;"></div>
<div style="left:170.5px;top:627.4000000000001px;width:29px;height:16px;font-size:11.5px;line-height:16px;font-weight:bold;color:#3b55bd;text-align:center;letter-spacing:-0.4px;">Abc</div>
<div style="left:207.5px;top:628.49px;font-family:'Liberation Sans', sans-serif;font-size:16px;line-height:16px;color:#1a1a1a;font-weight:normal;white-space:pre;transform:scaleX(0.89);transform-origin:0 0;">PAID_Amount</div>
<div style="left:170.5px;top:654.4000000000001px;width:29px;height:22px;border-radius:4px;background:#f1f2f4;border:1px solid #e1e3e6;"></div>
<div style="left:170.5px;top:657.4000000000001px;width:29px;height:16px;font-size:11.5px;line-height:16px;font-weight:bold;color:#3b55bd;text-align:center;letter-spacing:-0.4px;">#.#</div>
<svg style="position:absolute;left:184.5px;top:666.4000000000001px;" width="16" height="13" viewBox="0 0 16 13"><path d="M8 0.5 L15.5 12.5 H0.5 Z" fill="#f3b11c" stroke="#d08a00" stroke-width="0.8"/><rect x="7" y="4" width="2" height="5" fill="#222"/><rect x="7" y="10" width="2" height="1.6" fill="#222"/></svg>
<div style="left:207.5px;top:658.49px;font-family:'Liberation Sans', sans-serif;font-size:16px;line-height:16px;color:#1a1a1a;font-weight:normal;white-space:pre;transform:scaleX(0.89);transform-origin:0 0;">TOTAL_DUE</div>
<div style="left:170.5px;top:684.4000000000001px;width:29px;height:22px;border-radius:4px;background:#f1f2f4;border:1px solid #e1e3e6;"></div>
<div style="left:170.5px;top:687.4000000000001px;width:29px;height:16px;font-size:11.5px;line-height:16px;font-weight:bold;color:#3b55bd;text-align:center;letter-spacing:-0.4px;">Abc</div>
<div style="left:207.5px;top:688.49px;font-family:'Liberation Sans', sans-serif;font-size:16px;line-height:16px;color:#1a1a1a;font-weight:normal;white-space:pre;transform:scaleX(0.89);transform-origin:0 0;">NOTES</div>
<svg style="position:absolute;left:118px;top:721.2px;" width="12" height="8" viewBox="0 0 12 8"><path d="M1 1 L6 6 L11 1" stroke="#444" stroke-width="1.8" fill="none"/></svg>
<svg style="position:absolute;left:146px;top:715.2px;" width="21" height="21" viewBox="0 0 21 21"><rect x="0.5" y="0.5" width="20" height="20" rx="3" fill="#f5bb55"/><rect x="3.5" y="3.5" width="6" height="6" fill="#e39a22"/><rect x="11.5" y="3.5" width="6" height="6" fill="#e39a22"/><rect x="3.5" y="11.5" width="6" height="6" fill="#e39a22"/><rect x="11.5" y="11.5" width="6" height="6" fill="#e39a22"/></svg>
<div style="left:176.75px;top:718.59px;font-family:'Liberation Sans', sans-serif;font-size:16px;line-height:16px;color:#1b1b8e;font-weight:bold;white-space:pre;transform:scaleX(0.9);transform-origin:0 0;">Service_Description</div>
<div style="left:170.5px;top:744.4000000000001px;width:29px;height:22px;border-radius:4px;background:#f1f2f4;border:1px solid #e1e3e6;"></div>
<div style="left:170.5px;top:747.4000000000001px;width:29px;height:16px;font-size:11.5px;line-height:16px;font-weight:bold;color:#3b55bd;text-align:center;letter-spacing:-0.4px;">Abc</div>
<div style="left:207.5px;top:748.49px;font-family:'Liberation Sans', sans-serif;font-size:16px;line-height:16px;color:#1a1a1a;font-weight:normal;white-space:pre;transform:scaleX(0.89);transform-origin:0 0;">Description</div>
<div style="left:170.5px;top:774.4000000000001px;width:29px;height:22px;border-radius:4px;background:#f1f2f4;border:1px solid #e1e3e6;"></div>
<div style="left:170.5px;top:777.4000000000001px;width:29px;height:16px;font-size:11.5px;line-height:16px;font-weight:bold;color:#3b55bd;text-align:center;letter-spacing:-0.4px;">123</div>
<div style="left:207.5px;top:778.49px;font-family:'Liberation Sans', sans-serif;font-size:16px;line-height:16px;color:#1a1a1a;font-weight:normal;white-space:pre;transform:scaleX(0.89);transform-origin:0 0;">Quantity</div>
<div style="left:170.5px;top:804.4000000000001px;width:29px;height:22px;border-radius:4px;background:#f1f2f4;border:1px solid #e1e3e6;"></div>
<div style="left:170.5px;top:807.4000000000001px;width:29px;height:16px;font-size:11.5px;line-height:16px;font-weight:bold;color:#3b55bd;text-align:center;letter-spacing:-0.4px;">#.#</div>
<div style="left:205px;top:805.2px;width:71px;height:20px;background:#0a63d0;"></div>
<div style="left:207.5px;top:808.49px;font-family:'Liberation Sans', sans-serif;font-size:16px;line-height:16px;color:#ffffff;font-weight:normal;white-space:pre;transform:scaleX(0.89);transform-origin:0 0;">Unit_Price</div>
<div style="left:170.5px;top:834.4000000000001px;width:29px;height:22px;border-radius:4px;background:#f1f2f4;border:1px solid #e1e3e6;"></div>
<div style="left:170.5px;top:837.4000000000001px;width:29px;height:16px;font-size:11.5px;line-height:16px;font-weight:bold;color:#3b55bd;text-align:center;letter-spacing:-0.4px;">#.#</div>
<div style="left:207.5px;top:838.49px;font-family:'Liberation Sans', sans-serif;font-size:16px;line-height:16px;color:#1a1a1a;font-weight:normal;white-space:pre;transform:scaleX(0.89);transform-origin:0 0;">Line_Total</div>
<div style="left:358px;top:118px;width:179px;height:38px;background:#c4c4c4;"></div>
<div style="left:365.5px;top:129.50px;font-family:'Liberation Sans', sans-serif;font-size:15.4px;line-height:15.4px;color:#262626;font-weight:normal;white-space:pre;transform:scaleX(0.935);transform-origin:0 0;">Field_Verification.Rmd</div>
<svg style="position:absolute;left:1429px;top:138px;" width="12" height="6" viewBox="0 0 12 6"><path d="M0 0 H11 L5.5 5 Z" fill="#222"/></svg>
<svg style="position:absolute;left:1447px;top:131px;" width="13" height="13" viewBox="0 0 13 13"><path d="M1.5 1.5 L11.5 11.5 M11.5 1.5 L1.5 11.5" stroke="#222" stroke-width="2.2"/></svg>
<div style="left:357px;top:156px;width:105px;height:1px;background:#b9b9b9;"></div>
<div style="left:357px;top:156px;width:1105px;height:2px;background:#bdbdbd;"></div>
<div style="left:358px;top:156px;width:2px;height:863px;background:#b0b0b0;"></div>
<div style="left:1460px;top:156px;width:2px;height:863px;background:#b4b4b4;"></div>
<div style="left:357px;top:1017px;width:1105px;height:2px;background:#bdbdbd;"></div>
<div style="left:360px;top:158px;width:1100px;height:55px;background:#f2f5f8;"></div>
<div style="left:360px;top:213px;width:1100px;height:1px;background:#a8a8a8;"></div>
<svg style="position:absolute;left:374px;top:164px;" width="7" height="44" viewBox="0 0 7 44"><rect x="0" y="0" width="1.6" height="1.6" fill="#d6d9dc"/><rect x="5" y="0" width="1.6" height="1.6" fill="#d6d9dc"/><rect x="0" y="5" width="1.6" height="1.6" fill="#d6d9dc"/><rect x="5" y="5" width="1.6" height="1.6" fill="#d6d9dc"/><rect x="0" y="10" width="1.6" height="1.6" fill="#d6d9dc"/><rect x="5" y="10" width="1.6" height="1.6" fill="#d6d9dc"/><rect x="0" y="15" width="1.6" height="1.6" fill="#d6d9dc"/><rect x="5" y="15" width="1.6" height="1.6" fill="#d6d9dc"/><rect x="0" y="20" width="1.6" height="1.6" fill="#d6d9dc"/><rect x="5" y="20" width="1.6" height="1.6" fill="#d6d9dc"/><rect x="0" y="25" width="1.6" height="1.6" fill="#d6d9dc"/><rect x="5" y="25" width="1.6" height="1.6" fill="#d6d9dc"/><rect x="0" y="30" width="1.6" height="1.6" fill="#d6d9dc"/><rect x="5" y="30" width="1.6" height="1.6" fill="#d6d9dc"/><rect x="0" y="35" width="1.6" height="1.6" fill="#d6d9dc"/><rect x="5" y="35" width="1.6" height="1.6" fill="#d6d9dc"/><rect x="0" y="40" width="1.6" height="1.6" fill="#d6d9dc"/><rect x="5" y="40" width="1.6" height="1.6" fill="#d6d9dc"/><rect x="2.5" y="2.5" width="1.6" height="1.6" fill="#c2c5c8"/><rect x="2.5" y="7.5" width="1.6" height="1.6" fill="#c2c5c8"/><rect x="2.5" y="12.5" width="1.6" height="1.6" fill="#c2c5c8"/><rect x="2.5" y="17.5" width="1.6" height="1.6" fill="#c2c5c8"/><rect x="2.5" y="22.5" width="1.6" height="1.6" fill="#c2c5c8"/><rect x="2.5" y="27.5" width="1.6" height="1.6" fill="#c2c5c8"/><rect x="2.5" y="32.5" width="1.6" height="1.6" fill="#c2c5c8"/><rect x="2.5" y="37.5" width="1.6" height="1.6" fill="#c2c5c8"/></svg>
<svg style="position:absolute;left:391px;top:174px;" width="26" height="23" viewBox="0 0 26 23"><path d="M4 13 A9 9 0 0 1 20 6" stroke="#3cbf3c" stroke-width="3" fill="none"/><path d="M22 10 A9 9 0 0 1 6 17" stroke="#3cbf3c" stroke-width="3" fill="none"/><path d="M17 2 L24 9 L15 10 Z" fill="#3cbf3c"/><path d="M9 21 L2 14 L11 13 Z" fill="#3cbf3c"/></svg>
<div style="left:425px;top:168px;width:1px;height:34px;background:#d6d9dd;"></div>
<svg style="position:absolute;left:439px;top:176px;" width="24" height="18" viewBox="0 0 24 18"><path d="M4 14 C7 5 15 4 21 10" stroke="#2f8ee0" stroke-width="4" fill="none"/><path d="M0 17 L1 5 L10 12 Z" fill="#2f8ee0"/></svg>
<svg style="position:absolute;left:474px;top:182px;" width="9" height="6" viewBox="0 0 9 6"><path d="M0 0 H8 L4 5 Z" fill="#000"/></svg>
<svg style="position:absolute;left:494px;top:176px;" width="24" height="18" viewBox="0 0 24 18"><path d="M20 14 C17 5 9 4 3 10" stroke="#b3b3b3" stroke-width="4" fill="none"/><path d="M24 17 L23 5 L14 12 Z" fill="#b3b3b3"/></svg>
<svg style="position:absolute;left:529px;top:182px;" width="9" height="6" viewBox="0 0 9 6"><path d="M0 0 H8 L4 5 Z" fill="#b0b0b0"/></svg>
<div style="left:543px;top:168px;width:1px;height:34px;background:#d6d9dd;"></div>
<svg style="position:absolute;left:553px;top:173px;" width="27" height="25" viewBox="0 0 27 25"><path d="M3 8 L6 1 H10 V18 H2 Z M14 1 H18 L21 8 L22 18 H14 Z" fill="#2f8ee0"/><rect x="9" y="5" width="6" height="7" fill="#2f8ee0"/><rect x="2" y="17" width="9" height="3" fill="#f39a1e"/><path d="M15 19 H24 M20 15 L25 19 L20 23" stroke="#f39a1e" stroke-width="2.4" fill="none"/></svg>
<svg style="position:absolute;left:592px;top:173px;" width="23" height="24" viewBox="0 0 23 24"><rect x="0.5" y="0.5" width="21" height="18" fill="#fff" stroke="#e0e0e0"/><circle cx="4" cy="9" r="2.3" fill="#f39a1e"/><circle cx="9" cy="9" r="2.3" fill="#f39a1e"/><circle cx="17" cy="7" r="2.5" fill="none" stroke="#2f8ee0" stroke-width="1.6"/><circle cx="13" cy="17" r="4" fill="none" stroke="#777" stroke-width="2.4"/></svg>
<svg style="position:absolute;left:629px;top:173px;" width="25" height="24" viewBox="0 0 25 24"><rect x="1" y="1" width="23" height="4" fill="#f39a1e"/><path d="M13 9 H23 M16 13 H23 M16 17 H23" stroke="#ddd" stroke-width="1.5"/><circle cx="10" cy="13" r="5.5" fill="#e8f2fc" stroke="#2f8ee0" stroke-width="2.2"/><path d="M6 17 L1 22" stroke="#2f8ee0" stroke-width="2.6"/></svg>
<svg style="position:absolute;left:668px;top:172px;" width="23" height="26" viewBox="0 0 23 26"><rect x="1" y="9" width="5" height="16" fill="#2f8ee0"/><rect x="9" y="13" width="5" height="12" fill="#f39a1e"/><rect x="17" y="15" width="5" height="10" fill="#888"/><path d="M3 3 L10 7 L19 10" stroke="#3cbf3c" stroke-width="2" fill="none"/><circle cx="3" cy="3" r="2.5" fill="#3cbf3c"/><circle cx="10" cy="7" r="2.5" fill="#3cbf3c"/><circle cx="19" cy="10" r="2.5" fill="#3cbf3c"/></svg>
<svg style="position:absolute;left:703px;top:172px;" width="26" height="25" viewBox="0 0 26 25"><rect x="22.90" y="11.70" width="3.6" height="3.6" fill="#bdbdbd" transform="rotate(0 24.70 13.50)"/><rect x="20.79" y="16.79" width="3.6" height="3.6" fill="#bdbdbd" transform="rotate(45 22.59 18.59)"/><rect x="15.70" y="18.90" width="3.6" height="3.6" fill="#bdbdbd" transform="rotate(90 17.50 20.70)"/><rect x="10.61" y="16.79" width="3.6" height="3.6" fill="#bdbdbd" transform="rotate(135 12.41 18.59)"/><rect x="8.50" y="11.70" width="3.6" height="3.6" fill="#bdbdbd" transform="rotate(180 10.30 13.50)"/><rect x="10.61" y="6.61" width="3.6" height="3.6" fill="#bdbdbd" transform="rotate(225 12.41 8.41)"/><rect x="15.70" y="4.50" width="3.6" height="3.6" fill="#bdbdbd" transform="rotate(270 17.50 6.30)"/><rect x="20.79" y="6.61" width="3.6" height="3.6" fill="#bdbdbd" transform="rotate(315 22.59 8.41)"/><circle cx="17.5" cy="13.5" r="6.5" fill="#bdbdbd"/><circle cx="17.5" cy="13.5" r="3.8" fill="#eceef0"/><path d="M2 9.5 H10 M2 13 H10 M2 16.5 H10 M2 20 H10" stroke="#c6c6c6" stroke-width="2"/><circle cx="4.5" cy="4" r="3" fill="#c4c4c4"/></svg>
<div style="left:742px;top:175.01px;font-family:'Liberation Serif', serif;font-size:22px;line-height:22px;color:#b3b3b3;font-weight:bold;white-space:pre;">A</div>
<svg style="position:absolute;left:754px;top:180px;" width="12" height="14" viewBox="0 0 12 14"><path d="M2 12 L10 3" stroke="#c6c6c6" stroke-width="3.2"/></svg>
<div style="left:775px;top:168px;width:1px;height:34px;background:#d6d9dd;"></div>
<svg style="position:absolute;left:786px;top:173px;" width="25" height="24" viewBox="0 0 25 24"><rect x="0.5" y="0.5" width="23" height="22" fill="#f4f1ee" stroke="#e6e3e0"/><text x="3" y="10" font-family="Liberation Sans" font-weight="bold" font-size="12" fill="#f39a1e">a</text><text x="12" y="21" font-family="Liberation Sans" font-weight="bold" font-size="13" fill="#2f8ee0">z</text></svg>
<svg style="position:absolute;left:824px;top:173px;" width="25" height="24" viewBox="0 0 25 24"><rect x="0.5" y="0.5" width="23" height="22" fill="#f4f1ee" stroke="#e6e3e0"/><text x="2" y="13" font-family="Liberation Sans" font-weight="bold" font-size="13" fill="#f39a1e">0</text><text x="12" y="21" font-family="Liberation Sans" font-weight="bold" font-size="13" fill="#2f8ee0">9</text></svg>
<svg style="position:absolute;left:861px;top:173px;" width="25" height="24" viewBox="0 0 25 24"><rect x="0.5" y="0.5" width="23" height="22" fill="#f4f1ee" stroke="#e6e3e0"/><text x="3" y="10" font-family="Liberation Sans" font-weight="bold" font-size="10" fill="#f39a1e">a-z</text><text x="3" y="20" font-family="Liberation Sans" font-weight="bold" font-size="10" fill="#2f8ee0">0-9</text></svg>
<svg style="position:absolute;left:899px;top:173px;" width="25" height="24" viewBox="0 0 25 24"><rect x="0.5" y="0.5" width="23" height="22" fill="#f4f1ee" stroke="#e6e3e0"/><rect x="3" y="16" width="17" height="2.5" fill="#2f8ee0"/></svg>
<svg style="position:absolute;left:936px;top:173px;" width="25" height="24" viewBox="0 0 25 24"><rect x="0.5" y="0.5" width="23" height="22" fill="#f4f1ee" stroke="#e6e3e0"/><text x="4" y="17" font-family="Liberation Sans" font-weight="bold" font-size="15" fill="#2f8ee0">[ ]</text></svg>
<div style="left:970px;top:168px;width:1px;height:34px;background:#d6d9dd;"></div>
<div style="left:975px;top:167px;width:38px;height:37px;border:1px solid #d0d0d0;background:#f2f5f8;"></div>
<svg style="position:absolute;left:982px;top:173px;" width="23" height="24" viewBox="0 0 23 24"><rect x="0" y="1" width="18" height="5" fill="#2f7fc8" stroke="#235f9a" stroke-width="0.6"/><rect x="0" y="8" width="18" height="5" fill="#c5cdd6" stroke="#8a96a2" stroke-width="0.6"/><rect x="0" y="15" width="18" height="5" fill="#c5cdd6" stroke="#8a96a2" stroke-width="0.6"/><rect x="13" y="13" width="9" height="9" fill="#d0021b"/></svg>
<svg style="position:absolute;left:1020px;top:173px;" width="24" height="24" viewBox="0 0 24 24"><circle cx="12" cy="12" r="10.5" fill="none" stroke="#c4c4c4" stroke-width="1.8"/><path d="M12 18 V6 M7.5 10.5 L12 6 L16.5 10.5" stroke="#c4c4c4" stroke-width="2" fill="none"/></svg>
<svg style="position:absolute;left:1058px;top:173px;" width="24" height="24" viewBox="0 0 24 24"><circle cx="12" cy="12" r="10.5" fill="none" stroke="#c4c4c4" stroke-width="1.8"/><path d="M12 6 V18 M7.5 13.5 L12 18 L16.5 13.5" stroke="#c4c4c4" stroke-width="2" fill="none"/></svg>
<svg style="position:absolute;left:1094px;top:174px;" width="25" height="24" viewBox="0 0 25 24"><rect x="3" y="1" width="19" height="6" fill="#2f7fc8"/><rect x="3" y="9" width="19" height="5" fill="#b3c0cc"/><rect x="3" y="16" width="19" height="6" fill="#b3c0cc"/><path d="M0 11.5 L5 9 V14 Z M25 11.5 L20 9 V14 Z" fill="#f39a1e"/><rect x="4" y="10.5" width="17" height="2" fill="#f39a1e"/></svg>
<svg style="position:absolute;left:1132px;top:182px;" width="24" height="7" viewBox="0 0 24 7"><circle cx="3" cy="3.5" r="2.6" fill="#7a7a7a"/><circle cx="11" cy="3.5" r="2.6" fill="#7a7a7a"/><circle cx="19" cy="3.5" r="2.6" fill="#7a7a7a"/></svg>
<div style="left:360px;top:214px;width:1100px;height:27px;background:#f0f0f0;"></div>
<div style="left:435px;top:214px;width:1025px;height:27px;background:#f3ddb3;"></div>
<div style="left:437px;top:218px;width:1023px;height:18px;background:#f5e1bb;border-top:1px solid #ead09c;border-bottom:1px solid #ead09c;"></div>
<svg style="position:absolute;left:439px;top:226px;" width="1020" height="4" viewBox="0 0 1020 4"><rect x="0.00" y="0.6" width="2.5" height="2.5" fill="#1b8db5"/><rect x="10.00" y="0.6" width="2.5" height="2.5" fill="#1b8db5"/><rect x="20.00" y="0.6" width="2.5" height="2.5" fill="#1b8db5"/><rect x="30.00" y="0.6" width="2.5" height="2.5" fill="#1b8db5"/><rect x="40.00" y="0.6" width="2.5" height="2.5" fill="#1b8db5"/><rect x="50.00" y="0.6" width="2.5" height="2.5" fill="#1b8db5"/><rect x="60.00" y="0.6" width="2.5" height="2.5" fill="#1b8db5"/><rect x="70.00" y="0.6" width="2.5" height="2.5" fill="#1b8db5"/><rect x="80.00" y="0.6" width="2.5" height="2.5" fill="#1b8db5"/><rect x="90.00" y="0.6" width="2.5" height="2.5" fill="#1b8db5"/><rect x="100.00" y="0.6" width="2.5" height="2.5" fill="#1b8db5"/><rect x="110.00" y="0.6" width="2.5" height="2.5" fill="#1b8db5"/><rect x="120.00" y="0.6" width="2.5" height="2.5" fill="#1b8db5"/><rect x="130.00" y="0.6" width="2.5" height="2.5" fill="#1b8db5"/><rect x="140.00" y="0.6" width="2.5" height="2.5" fill="#1b8db5"/><rect x="150.00" y="0.6" width="2.5" height="2.5" fill="#1b8db5"/><rect x="160.00" y="0.6" width="2.5" height="2.5" fill="#1b8db5"/><rect x="170.00" y="0.6" width="2.5" height="2.5" fill="#1b8db5"/><rect x="180.00" y="0.6" width="2.5" height="2.5" fill="#1b8db5"/><rect x="190.00" y="0.6" width="2.5" height="2.5" fill="#1b8db5"/><rect x="200.00" y="0.6" width="2.5" height="2.5" fill="#1b8db5"/><rect x="210.00" y="0.6" width="2.5" height="2.5" fill="#1b8db5"/><rect x="220.00" y="0.6" width="2.5" height="2.5" fill="#1b8db5"/><rect x="230.00" y="0.6" width="2.5" height="2.5" fill="#1b8db5"/><rect x="240.00" y="0.6" width="2.5" height="2.5" fill="#1b8db5"/><rect x="250.00" y="0.6" width="2.5" height="2.5" fill="#1b8db5"/><rect x="260.00" y="0.6" width="2.5" height="2.5" fill="#1b8db5"/><rect x="270.00" y="0.6" width="2.5" height="2.5" fill="#1b8db5"/><rect x="280.00" y="0.6" width="2.5" height="2.5" fill="#1b8db5"/><rect x="290.00" y="0.6" width="2.5" height="2.5" fill="#1b8db5"/><rect x="300.00" y="0.6" width="2.5" height="2.5" fill="#1b8db5"/><rect x="310.00" y="0.6" width="2.5" height="2.5" fill="#1b8db5"/><rect x="320.00" y="0.6" width="2.5" height="2.5" fill="#1b8db5"/><rect x="330.00" y="0.6" width="2.5" height="2.5" fill="#1b8db5"/><rect x="340.00" y="0.6" width="2.5" height="2.5" fill="#1b8db5"/><rect x="350.00" y="0.6" width="2.5" height="2.5" fill="#1b8db5"/><rect x="360.00" y="0.6" width="2.5" height="2.5" fill="#1b8db5"/><rect x="370.00" y="0.6" width="2.5" height="2.5" fill="#1b8db5"/><rect x="380.00" y="0.6" width="2.5" height="2.5" fill="#1b8db5"/><rect x="390.00" y="0.6" width="2.5" height="2.5" fill="#1b8db5"/><rect x="400.00" y="0.6" width="2.5" height="2.5" fill="#1b8db5"/><rect x="410.00" y="0.6" width="2.5" height="2.5" fill="#1b8db5"/><rect x="420.00" y="0.6" width="2.5" height="2.5" fill="#1b8db5"/><rect x="430.00" y="0.6" width="2.5" height="2.5" fill="#1b8db5"/><rect x="440.00" y="0.6" width="2.5" height="2.5" fill="#1b8db5"/><rect x="450.00" y="0.6" width="2.5" height="2.5" fill="#1b8db5"/><rect x="460.00" y="0.6" width="2.5" height="2.5" fill="#1b8db5"/><rect x="470.00" y="0.6" width="2.5" height="2.5" fill="#1b8db5"/><rect x="480.00" y="0.6" width="2.5" height="2.5" fill="#1b8db5"/><rect x="490.00" y="0.6" width="2.5" height="2.5" fill="#1b8db5"/><rect x="500.00" y="0.6" width="2.5" height="2.5" fill="#1b8db5"/><rect x="510.00" y="0.6" width="2.5" height="2.5" fill="#1b8db5"/><rect x="520.00" y="0.6" width="2.5" height="2.5" fill="#1b8db5"/><rect x="530.00" y="0.6" width="2.5" height="2.5" fill="#1b8db5"/><rect x="540.00" y="0.6" width="2.5" height="2.5" fill="#1b8db5"/><rect x="550.00" y="0.6" width="2.5" height="2.5" fill="#1b8db5"/><rect x="560.00" y="0.6" width="2.5" height="2.5" fill="#1b8db5"/><rect x="570.00" y="0.6" width="2.5" height="2.5" fill="#1b8db5"/><rect x="580.00" y="0.6" width="2.5" height="2.5" fill="#1b8db5"/><rect x="590.00" y="0.6" width="2.5" height="2.5" fill="#1b8db5"/><rect x="600.00" y="0.6" width="2.5" height="2.5" fill="#1b8db5"/><rect x="610.00" y="0.6" width="2.5" height="2.5" fill="#1b8db5"/><rect x="620.00" y="0.6" width="2.5" height="2.5" fill="#1b8db5"/><rect x="630.00" y="0.6" width="2.5" height="2.5" fill="#1b8db5"/><rect x="640.00" y="0.6" width="2.5" height="2.5" fill="#1b8db5"/><rect x="650.00" y="0.6" width="2.5" height="2.5" fill="#1b8db5"/><rect x="660.00" y="0.6" width="2.5" height="2.5" fill="#1b8db5"/><rect x="670.00" y="0.6" width="2.5" height="2.5" fill="#1b8db5"/><rect x="680.00" y="0.6" width="2.5" height="2.5" fill="#1b8db5"/><rect x="690.00" y="0.6" width="2.5" height="2.5" fill="#1b8db5"/><rect x="700.00" y="0.6" width="2.5" height="2.5" fill="#1b8db5"/><rect x="710.00" y="0.6" width="2.5" height="2.5" fill="#1b8db5"/><rect x="720.00" y="0.6" width="2.5" height="2.5" fill="#1b8db5"/><rect x="730.00" y="0.6" width="2.5" height="2.5" fill="#1b8db5"/><rect x="740.00" y="0.6" width="2.5" height="2.5" fill="#1b8db5"/><rect x="750.00" y="0.6" width="2.5" height="2.5" fill="#1b8db5"/><rect x="760.00" y="0.6" width="2.5" height="2.5" fill="#1b8db5"/><rect x="770.00" y="0.6" width="2.5" height="2.5" fill="#1b8db5"/><rect x="780.00" y="0.6" width="2.5" height="2.5" fill="#1b8db5"/><rect x="790.00" y="0.6" width="2.5" height="2.5" fill="#1b8db5"/><rect x="800.00" y="0.6" width="2.5" height="2.5" fill="#1b8db5"/><rect x="810.00" y="0.6" width="2.5" height="2.5" fill="#1b8db5"/><rect x="820.00" y="0.6" width="2.5" height="2.5" fill="#1b8db5"/><rect x="830.00" y="0.6" width="2.5" height="2.5" fill="#1b8db5"/><rect x="840.00" y="0.6" width="2.5" height="2.5" fill="#1b8db5"/><rect x="850.00" y="0.6" width="2.5" height="2.5" fill="#1b8db5"/><rect x="860.00" y="0.6" width="2.5" height="2.5" fill="#1b8db5"/><rect x="870.00" y="0.6" width="2.5" height="2.5" fill="#1b8db5"/><rect x="880.00" y="0.6" width="2.5" height="2.5" fill="#1b8db5"/><rect x="890.00" y="0.6" width="2.5" height="2.5" fill="#1b8db5"/><rect x="900.00" y="0.6" width="2.5" height="2.5" fill="#1b8db5"/><rect x="910.00" y="0.6" width="2.5" height="2.5" fill="#1b8db5"/><rect x="920.00" y="0.6" width="2.5" height="2.5" fill="#1b8db5"/><rect x="930.00" y="0.6" width="2.5" height="2.5" fill="#1b8db5"/><rect x="940.00" y="0.6" width="2.5" height="2.5" fill="#1b8db5"/><rect x="950.00" y="0.6" width="2.5" height="2.5" fill="#1b8db5"/><rect x="960.00" y="0.6" width="2.5" height="2.5" fill="#1b8db5"/><rect x="970.00" y="0.6" width="2.5" height="2.5" fill="#1b8db5"/><rect x="980.00" y="0.6" width="2.5" height="2.5" fill="#1b8db5"/><rect x="990.00" y="0.6" width="2.5" height="2.5" fill="#1b8db5"/><rect x="1000.00" y="0.6" width="2.5" height="2.5" fill="#1b8db5"/><rect x="1010.00" y="0.6" width="2.5" height="2.5" fill="#1b8db5"/></svg>
<div style="left:1353px;top:222px;width:35px;height:10px;background:#f5e1bb;"></div>
<div style="left:1354.5px;top:222.62px;font-family:'Liberation Serif', serif;font-size:14px;line-height:14px;color:#222;font-weight:bold;white-space:pre;letter-spacing:-0.3px;">&#209;&#209;&#216;</div>
<div style="left:360px;top:241px;width:1100px;height:2px;background:#a9a9a9;"></div>
<div style="left:360px;top:243px;width:67px;height:718px;background:#eef0f5;"></div>
<div style="left:360px;top:243px;width:22px;height:718px;background:#f0f1f4;"></div>
<div style="left:427px;top:243px;width:10px;height:718px;background:#ffffff;"></div>
<div style="left:437px;top:243px;width:1003px;height:718px;background:#fcfcfc;"></div>
<div style="left:1440px;top:243px;width:20px;height:718px;background:#f0f0f0;"></div>
<div style="left:1440px;top:395px;width:19px;height:280px;background:#c8c8c8;"></div>
<svg style="position:absolute;left:1441px;top:243px;" width="17" height="21" viewBox="0 0 17 21"><path d="M1.5 9.5 H15.5 M1.5 11.8 H15.5" stroke="#111" stroke-width="1.3"/><path d="M8.5 3 V8 M8.5 14 V19" stroke="#111" stroke-width="1.3"/><path d="M5.5 4.5 L8.5 1.5 L11.5 4.5 Z M5.5 17.5 L8.5 20.5 L11.5 17.5 Z" fill="#111" stroke="#111" stroke-width="1"/></svg>
<svg style="position:absolute;left:1444px;top:270px;" width="11" height="8" viewBox="0 0 11 8"><path d="M1 7 L5.5 2 L10 7" stroke="#555" stroke-width="1.8" fill="none"/></svg>
<svg style="position:absolute;left:1444px;top:946px;" width="11" height="8" viewBox="0 0 11 8"><path d="M1 1 L5.5 6 L10 1" stroke="#555" stroke-width="1.8" fill="none"/></svg>
<div style="left:437px;top:243px;width:1002px;height:718px;overflow:hidden;">
<div style="left:0px;top:-7.02000000000001px;width:1002px;height:33.8px;background:#f6f6f6;"></div>
<div style="left:0px;top:60.51999999999998px;width:1002px;height:33.8px;background:#f6f6f6;"></div>
<div style="left:0px;top:128.06px;width:1002px;height:33.8px;background:#f6f6f6;"></div>
<div style="left:0px;top:195.60000000000002px;width:1002px;height:33.8px;background:#f6f6f6;"></div>
<div style="left:0px;top:198.7px;width:1002px;height:27.4px;background:#e3e9f3;border-radius:5px;"></div>
<div style="left:0px;top:198.7px;width:296px;height:27.4px;background:#d2d9ea;border-radius:5px;"></div>
<div style="left:697.6px;top:198.7px;width:28.6px;height:27.4px;background:#d2d9ea;border-radius:5px;"></div>
<div style="left:837px;top:198.7px;width:70px;height:27.4px;background:#33577e;border-radius:6px;"></div>
<div style="left:908px;top:198.7px;width:78px;height:27.4px;background:#d2d9ea;border-radius:5px;"></div>
<div style="left:0px;top:232.46999999999997px;width:1002px;height:27.4px;background:#e3e9f3;border-radius:5px;"></div>
<div style="left:0px;top:232.46999999999997px;width:296px;height:27.4px;background:#d2d9ea;border-radius:5px;"></div>
<div style="left:697.6px;top:232.46999999999997px;width:28.6px;height:27.4px;background:#d2d9ea;border-radius:5px;"></div>
<div style="left:837px;top:232.46999999999997px;width:70px;height:27.4px;background:#33577e;border-radius:6px;"></div>
<div style="left:908px;top:232.46999999999997px;width:78px;height:27.4px;background:#d2d9ea;border-radius:5px;"></div>
<div style="left:0px;top:263.14px;width:1002px;height:33.8px;background:#f6f6f6;"></div>
<div style="left:0px;top:266.23999999999995px;width:1002px;height:27.4px;background:#e3e9f3;border-radius:5px;"></div>
<div style="left:0px;top:266.23999999999995px;width:296px;height:27.4px;background:#d2d9ea;border-radius:5px;"></div>
<div style="left:697.6px;top:266.23999999999995px;width:28.6px;height:27.4px;background:#d2d9ea;border-radius:5px;"></div>
<div style="left:837px;top:266.23999999999995px;width:70px;height:27.4px;background:#33577e;border-radius:6px;"></div>
<div style="left:908px;top:266.23999999999995px;width:78px;height:27.4px;background:#d2d9ea;border-radius:5px;"></div>
<div style="left:0px;top:300.01px;width:1002px;height:27.4px;background:#e3e9f3;border-radius:5px;"></div>
<div style="left:0px;top:300.01px;width:296px;height:27.4px;background:#d2d9ea;border-radius:5px;"></div>
<div style="left:697.6px;top:300.01px;width:28.6px;height:27.4px;background:#d2d9ea;border-radius:5px;"></div>
<div style="left:837px;top:300.01px;width:70px;height:27.4px;background:#33577e;border-radius:6px;"></div>
<div style="left:908px;top:300.01px;width:78px;height:27.4px;background:#d2d9ea;border-radius:5px;"></div>
<div style="left:0px;top:330.68000000000006px;width:1002px;height:33.8px;background:#f6f6f6;"></div>
<div style="left:0px;top:333.7800000000001px;width:1002px;height:27.4px;background:#e3e9f3;border-radius:5px;"></div>
<div style="left:0px;top:333.7800000000001px;width:296px;height:27.4px;background:#d2d9ea;border-radius:5px;"></div>
<div style="left:697.6px;top:333.7800000000001px;width:28.6px;height:27.4px;background:#d2d9ea;border-radius:5px;"></div>
<div style="left:837px;top:333.7800000000001px;width:70px;height:27.4px;background:#33577e;border-radius:6px;"></div>
<div style="left:908px;top:333.7800000000001px;width:78px;height:27.4px;background:#d2d9ea;border-radius:5px;"></div>
<div style="left:0px;top:367.55000000000007px;width:1002px;height:27.4px;background:#e3e9f3;border-radius:5px;"></div>
<div style="left:0px;top:367.55000000000007px;width:296px;height:27.4px;background:#d2d9ea;border-radius:5px;"></div>
<div style="left:697.6px;top:367.55000000000007px;width:28.6px;height:27.4px;background:#d2d9ea;border-radius:5px;"></div>
<div style="left:837px;top:367.55000000000007px;width:70px;height:27.4px;background:#33577e;border-radius:6px;"></div>
<div style="left:908px;top:367.55000000000007px;width:78px;height:27.4px;background:#d2d9ea;border-radius:5px;"></div>
<div style="left:0px;top:398.22px;width:1002px;height:33.8px;background:#f6f6f6;"></div>
<div style="left:0px;top:401.32000000000005px;width:1002px;height:27.4px;background:#e3e9f3;border-radius:5px;"></div>
<div style="left:0px;top:401.32000000000005px;width:296px;height:27.4px;background:#d2d9ea;border-radius:5px;"></div>
<div style="left:697.6px;top:401.32000000000005px;width:28.6px;height:27.4px;background:#d2d9ea;border-radius:5px;"></div>
<div style="left:837px;top:401.32000000000005px;width:70px;height:27.4px;background:#33577e;border-radius:6px;"></div>
<div style="left:908px;top:401.32000000000005px;width:78px;height:27.4px;background:#d2d9ea;border-radius:5px;"></div>
<div style="left:0px;top:435.09000000000003px;width:1002px;height:27.4px;background:#e3e9f3;border-radius:5px;"></div>
<div style="left:0px;top:435.09000000000003px;width:296px;height:27.4px;background:#d2d9ea;border-radius:5px;"></div>
<div style="left:697.6px;top:435.09000000000003px;width:28.6px;height:27.4px;background:#d2d9ea;border-radius:5px;"></div>
<div style="left:837px;top:435.09000000000003px;width:70px;height:27.4px;background:#33577e;border-radius:6px;"></div>
<div style="left:908px;top:435.09000000000003px;width:78px;height:27.4px;background:#d2d9ea;border-radius:5px;"></div>
<div style="left:0px;top:465.7600000000001px;width:1002px;height:33.8px;background:#f6f6f6;"></div>
<div style="left:0px;top:468.8600000000001px;width:1002px;height:27.4px;background:#e3e9f3;border-radius:5px;"></div>
<div style="left:0px;top:468.8600000000001px;width:296px;height:27.4px;background:#d2d9ea;border-radius:5px;"></div>
<div style="left:697.6px;top:468.8600000000001px;width:28.6px;height:27.4px;background:#d2d9ea;border-radius:5px;"></div>
<div style="left:837px;top:468.8600000000001px;width:70px;height:27.4px;background:#33577e;border-radius:6px;"></div>
<div style="left:908px;top:468.8600000000001px;width:78px;height:27.4px;background:#d2d9ea;border-radius:5px;"></div>
<div style="left:0px;top:502.6300000000001px;width:1002px;height:27.4px;background:#e3e9f3;border-radius:5px;"></div>
<div style="left:0px;top:502.6300000000001px;width:296px;height:27.4px;background:#d2d9ea;border-radius:5px;"></div>
<div style="left:697.6px;top:502.6300000000001px;width:28.6px;height:27.4px;background:#d2d9ea;border-radius:5px;"></div>
<div style="left:837px;top:502.6300000000001px;width:70px;height:27.4px;background:#33577e;border-radius:6px;"></div>
<div style="left:908px;top:502.6300000000001px;width:78px;height:27.4px;background:#d2d9ea;border-radius:5px;"></div>
<div style="left:0px;top:533.3000000000001px;width:1002px;height:33.8px;background:#f6f6f6;"></div>
<div style="left:0px;top:536.4000000000001px;width:1002px;height:27.4px;background:#e3e9f3;border-radius:5px;"></div>
<div style="left:0px;top:536.4000000000001px;width:296px;height:27.4px;background:#d2d9ea;border-radius:5px;"></div>
<div style="left:697.6px;top:536.4000000000001px;width:28.6px;height:27.4px;background:#d2d9ea;border-radius:5px;"></div>
<div style="left:837px;top:536.4000000000001px;width:70px;height:27.4px;background:#33577e;border-radius:6px;"></div>
<div style="left:908px;top:536.4000000000001px;width:78px;height:27.4px;background:#d2d9ea;border-radius:5px;"></div>
<div style="left:0px;top:570.1700000000001px;width:1002px;height:27.4px;background:#e3e9f3;border-radius:5px;"></div>
<div style="left:0px;top:570.1700000000001px;width:296px;height:27.4px;background:#d2d9ea;border-radius:5px;"></div>
<div style="left:697.6px;top:570.1700000000001px;width:28.6px;height:27.4px;background:#d2d9ea;border-radius:5px;"></div>
<div style="left:837px;top:570.1700000000001px;width:70px;height:27.4px;background:#33577e;border-radius:6px;"></div>
<div style="left:908px;top:570.1700000000001px;width:78px;height:27.4px;background:#d2d9ea;border-radius:5px;"></div>
<div style="left:0px;top:600.84px;width:1002px;height:33.8px;background:#f6f6f6;"></div>
<div style="left:0px;top:603.94px;width:1002px;height:27.4px;background:#e3e9f3;border-radius:5px;"></div>
<div style="left:0px;top:603.94px;width:296px;height:27.4px;background:#d2d9ea;border-radius:5px;"></div>
<div style="left:697.6px;top:603.94px;width:28.6px;height:27.4px;background:#d2d9ea;border-radius:5px;"></div>
<div style="left:837px;top:603.94px;width:70px;height:27.4px;background:#33577e;border-radius:6px;"></div>
<div style="left:908px;top:603.94px;width:78px;height:27.4px;background:#d2d9ea;border-radius:5px;"></div>
<div style="left:0px;top:637.71px;width:1002px;height:27.4px;background:#e3e9f3;border-radius:5px;"></div>
<div style="left:0px;top:637.71px;width:296px;height:27.4px;background:#d2d9ea;border-radius:5px;"></div>
<div style="left:697.6px;top:637.71px;width:28.6px;height:27.4px;background:#d2d9ea;border-radius:5px;"></div>
<div style="left:837px;top:637.71px;width:70px;height:27.4px;background:#33577e;border-radius:6px;"></div>
<div style="left:908px;top:637.71px;width:78px;height:27.4px;background:#d2d9ea;border-radius:5px;"></div>
<div style="left:0px;top:668.38px;width:1002px;height:33.8px;background:#f6f6f6;"></div>
<div style="left:0px;top:671.48px;width:1002px;height:27.4px;background:#e3e9f3;border-radius:5px;"></div>
<div style="left:0px;top:671.48px;width:296px;height:27.4px;background:#d2d9ea;border-radius:5px;"></div>
<div style="left:697.6px;top:671.48px;width:28.6px;height:27.4px;background:#d2d9ea;border-radius:5px;"></div>
<div style="left:837px;top:671.48px;width:70px;height:27.4px;background:#33577e;border-radius:6px;"></div>
<div style="left:908px;top:671.48px;width:78px;height:27.4px;background:#d2d9ea;border-radius:5px;"></div>
<div style="left:0px;top:705.2500000000001px;width:1002px;height:27.4px;background:#e3e9f3;border-radius:5px;"></div>
<div style="left:0px;top:705.2500000000001px;width:296px;height:27.4px;background:#d2d9ea;border-radius:5px;"></div>
<div style="left:697.6px;top:705.2500000000001px;width:28.6px;height:27.4px;background:#d2d9ea;border-radius:5px;"></div>
<div style="left:837px;top:705.2500000000001px;width:70px;height:27.4px;background:#33577e;border-radius:6px;"></div>
<div style="left:908px;top:705.2500000000001px;width:78px;height:27.4px;background:#d2d9ea;border-radius:5px;"></div>
<div style="left:106.30px;top:4.26px;font-family:'Liberation Mono', monospace;font-size:16.67px;line-height:16.67px;color:#1e1e1e;font-weight:normal;white-space:pre;transform:scaleY(0.91);transform-origin:0 12.12px;">London</div>
<div style="left:576.30px;top:4.26px;font-family:'Liberation Mono', monospace;font-size:16.67px;line-height:16.67px;color:#1e1e1e;font-weight:normal;white-space:pre;transform:scaleY(0.91);transform-origin:0 12.12px;">Work Order#</div>
<div style="left:766.30px;top:4.26px;font-family:'Liberation Mono', monospace;font-size:16.67px;line-height:16.67px;color:#1e1e1e;font-weight:normal;white-space:pre;transform:scaleY(0.91);transform-origin:0 12.12px;">order#1</div>
<div style="left:106.30px;top:38.03px;font-family:'Liberation Mono', monospace;font-size:16.67px;line-height:16.67px;color:#1e1e1e;font-weight:normal;white-space:pre;transform:scaleY(0.91);transform-origin:0 12.12px;">UK</div>
<div style="left:606.30px;top:38.03px;font-family:'Liberation Mono', monospace;font-size:16.67px;line-height:16.67px;color:#1e1e1e;font-weight:normal;white-space:pre;transform:scaleY(0.91);transform-origin:0 12.12px;">P.O.#</div>
<div style="left:766.30px;top:38.03px;font-family:'Liberation Mono', monospace;font-size:16.67px;line-height:16.67px;color:#1e1e1e;font-weight:normal;white-space:pre;transform:scaleY(0.91);transform-origin:0 12.12px;">po#1</div>
<div style="left:106.30px;top:71.80px;font-family:'Liberation Mono', monospace;font-size:16.67px;line-height:16.67px;color:#1e1e1e;font-weight:normal;white-space:pre;transform:scaleY(0.91);transform-origin:0 12.12px;">phone#1</div>
<div style="left:606.30px;top:71.80px;font-family:'Liberation Mono', monospace;font-size:16.67px;line-height:16.67px;color:#1e1e1e;font-weight:normal;white-space:pre;transform:scaleY(0.91);transform-origin:0 12.12px;">Terms</div>
<div style="left:766.30px;top:71.80px;font-family:'Liberation Mono', monospace;font-size:16.67px;line-height:16.67px;color:#1e1e1e;font-weight:normal;white-space:pre;transform:scaleY(0.91);transform-origin:0 12.12px;">Net 60</div>
<div style="left:246.30px;top:173.11px;font-family:'Liberation Mono', monospace;font-size:16.67px;line-height:16.67px;color:#1e1e1e;font-weight:normal;white-space:pre;transform:scaleY(0.91);transform-origin:0 12.12px;">Description</div>
<div style="left:586.30px;top:173.11px;font-family:'Liberation Mono', monospace;font-size:16.67px;line-height:16.67px;color:#1e1e1e;font-weight:normal;white-space:pre;transform:scaleY(0.91);transform-origin:0 12.12px;">Quantity</div>
<div style="left:776.30px;top:173.11px;font-family:'Liberation Mono', monospace;font-size:16.67px;line-height:16.67px;color:#1e1e1e;font-weight:normal;white-space:pre;transform:scaleY(0.91);transform-origin:0 12.12px;">Unit Price</div>
<div style="left:946.30px;top:173.11px;font-family:'Liberation Mono', monospace;font-size:16.67px;line-height:16.67px;color:#1e1e1e;font-weight:normal;white-space:pre;transform:scaleY(0.91);transform-origin:0 12.12px;">Line T</div>
<div style="left:-3.70px;top:206.88px;font-family:'Liberation Mono', monospace;font-size:16.67px;line-height:16.67px;color:#56647f;font-weight:normal;white-space:pre;transform:scaleY(0.91);transform-origin:0 12.12px;">sulting Service description 1</div>
<div style="left:716.30px;top:206.88px;font-family:'Liberation Mono', monospace;font-size:16.67px;line-height:16.67px;color:#56647f;font-weight:normal;white-space:pre;transform:scaleY(0.91);transform-origin:0 12.12px;">1</div>
<div style="left:836.30px;top:206.88px;font-family:'Liberation Mono', monospace;font-size:16.67px;line-height:16.67px;color:#e6edf5;font-weight:normal;white-space:pre;transform:scaleY(0.91);transform-origin:0 12.12px;">150.00</div>
<div style="left:916.30px;top:206.88px;font-family:'Liberation Mono', monospace;font-size:16.67px;line-height:16.67px;color:#56647f;font-weight:normal;white-space:pre;transform:scaleY(0.91);transform-origin:0 12.12px;">150.00</div>
<div style="left:-3.70px;top:240.65px;font-family:'Liberation Mono', monospace;font-size:16.67px;line-height:16.67px;color:#56647f;font-weight:normal;white-space:pre;transform:scaleY(0.91);transform-origin:0 12.12px;">sulting Service description 2</div>
<div style="left:716.30px;top:240.65px;font-family:'Liberation Mono', monospace;font-size:16.67px;line-height:16.67px;color:#56647f;font-weight:normal;white-space:pre;transform:scaleY(0.91);transform-origin:0 12.12px;">2</div>
<div style="left:836.30px;top:240.65px;font-family:'Liberation Mono', monospace;font-size:16.67px;line-height:16.67px;color:#e6edf5;font-weight:normal;white-space:pre;transform:scaleY(0.91);transform-origin:0 12.12px;">150.00</div>
<div style="left:916.30px;top:240.65px;font-family:'Liberation Mono', monospace;font-size:16.67px;line-height:16.67px;color:#56647f;font-weight:normal;white-space:pre;transform:scaleY(0.91);transform-origin:0 12.12px;">300.00</div>
<div style="left:-3.70px;top:274.42px;font-family:'Liberation Mono', monospace;font-size:16.67px;line-height:16.67px;color:#56647f;font-weight:normal;white-space:pre;transform:scaleY(0.91);transform-origin:0 12.12px;">sulting Service description 3</div>
<div style="left:716.30px;top:274.42px;font-family:'Liberation Mono', monospace;font-size:16.67px;line-height:16.67px;color:#56647f;font-weight:normal;white-space:pre;transform:scaleY(0.91);transform-origin:0 12.12px;">3</div>
<div style="left:836.30px;top:274.42px;font-family:'Liberation Mono', monospace;font-size:16.67px;line-height:16.67px;color:#e6edf5;font-weight:normal;white-space:pre;transform:scaleY(0.91);transform-origin:0 12.12px;">150.00</div>
<div style="left:916.30px;top:274.42px;font-family:'Liberation Mono', monospace;font-size:16.67px;line-height:16.67px;color:#56647f;font-weight:normal;white-space:pre;transform:scaleY(0.91);transform-origin:0 12.12px;">450.00</div>
<div style="left:-3.70px;top:308.19px;font-family:'Liberation Mono', monospace;font-size:16.67px;line-height:16.67px;color:#56647f;font-weight:normal;white-space:pre;transform:scaleY(0.91);transform-origin:0 12.12px;">sulting Service description 4</div>
<div style="left:716.30px;top:308.19px;font-family:'Liberation Mono', monospace;font-size:16.67px;line-height:16.67px;color:#56647f;font-weight:normal;white-space:pre;transform:scaleY(0.91);transform-origin:0 12.12px;">4</div>
<div style="left:836.30px;top:308.19px;font-family:'Liberation Mono', monospace;font-size:16.67px;line-height:16.67px;color:#e6edf5;font-weight:normal;white-space:pre;transform:scaleY(0.91);transform-origin:0 12.12px;">750.00</div>
<div style="left:916.30px;top:308.19px;font-family:'Liberation Mono', monospace;font-size:16.67px;line-height:16.67px;color:#56647f;font-weight:normal;white-space:pre;transform:scaleY(0.91);transform-origin:0 12.12px;">3000.00</div>
<div style="left:-3.70px;top:341.96px;font-family:'Liberation Mono', monospace;font-size:16.67px;line-height:16.67px;color:#56647f;font-weight:normal;white-space:pre;transform:scaleY(0.91);transform-origin:0 12.12px;">sulting Service description 5</div>
<div style="left:716.30px;top:341.96px;font-family:'Liberation Mono', monospace;font-size:16.67px;line-height:16.67px;color:#56647f;font-weight:normal;white-space:pre;transform:scaleY(0.91);transform-origin:0 12.12px;">5</div>
<div style="left:836.30px;top:341.96px;font-family:'Liberation Mono', monospace;font-size:16.67px;line-height:16.67px;color:#e6edf5;font-weight:normal;white-space:pre;transform:scaleY(0.91);transform-origin:0 12.12px;">250.00</div>
<div style="left:916.30px;top:341.96px;font-family:'Liberation Mono', monospace;font-size:16.67px;line-height:16.67px;color:#56647f;font-weight:normal;white-space:pre;transform:scaleY(0.91);transform-origin:0 12.12px;">1250.00</div>
<div style="left:-3.70px;top:375.73px;font-family:'Liberation Mono', monospace;font-size:16.67px;line-height:16.67px;color:#56647f;font-weight:normal;white-space:pre;transform:scaleY(0.91);transform-origin:0 12.12px;">sulting Service description 6</div>
<div style="left:716.30px;top:375.73px;font-family:'Liberation Mono', monospace;font-size:16.67px;line-height:16.67px;color:#56647f;font-weight:normal;white-space:pre;transform:scaleY(0.91);transform-origin:0 12.12px;">6</div>
<div style="left:836.30px;top:375.73px;font-family:'Liberation Mono', monospace;font-size:16.67px;line-height:16.67px;color:#e6edf5;font-weight:normal;white-space:pre;transform:scaleY(0.91);transform-origin:0 12.12px;">150.00</div>
<div style="left:916.30px;top:375.73px;font-family:'Liberation Mono', monospace;font-size:16.67px;line-height:16.67px;color:#56647f;font-weight:normal;white-space:pre;transform:scaleY(0.91);transform-origin:0 12.12px;">900.00</div>
<div style="left:-3.70px;top:409.50px;font-family:'Liberation Mono', monospace;font-size:16.67px;line-height:16.67px;color:#56647f;font-weight:normal;white-space:pre;transform:scaleY(0.91);transform-origin:0 12.12px;">sulting Service description 7</div>
<div style="left:716.30px;top:409.50px;font-family:'Liberation Mono', monospace;font-size:16.67px;line-height:16.67px;color:#56647f;font-weight:normal;white-space:pre;transform:scaleY(0.91);transform-origin:0 12.12px;">7</div>
<div style="left:836.30px;top:409.50px;font-family:'Liberation Mono', monospace;font-size:16.67px;line-height:16.67px;color:#e6edf5;font-weight:normal;white-space:pre;transform:scaleY(0.91);transform-origin:0 12.12px;">50.00</div>
<div style="left:916.30px;top:409.50px;font-family:'Liberation Mono', monospace;font-size:16.67px;line-height:16.67px;color:#56647f;font-weight:normal;white-space:pre;transform:scaleY(0.91);transform-origin:0 12.12px;">350.00</div>
<div style="left:-3.70px;top:443.27px;font-family:'Liberation Mono', monospace;font-size:16.67px;line-height:16.67px;color:#56647f;font-weight:normal;white-space:pre;transform:scaleY(0.91);transform-origin:0 12.12px;">sulting Service description 8</div>
<div style="left:716.30px;top:443.27px;font-family:'Liberation Mono', monospace;font-size:16.67px;line-height:16.67px;color:#56647f;font-weight:normal;white-space:pre;transform:scaleY(0.91);transform-origin:0 12.12px;">8</div>
<div style="left:836.30px;top:443.27px;font-family:'Liberation Mono', monospace;font-size:16.67px;line-height:16.67px;color:#e6edf5;font-weight:normal;white-space:pre;transform:scaleY(0.91);transform-origin:0 12.12px;">50.00</div>
<div style="left:916.30px;top:443.27px;font-family:'Liberation Mono', monospace;font-size:16.67px;line-height:16.67px;color:#56647f;font-weight:normal;white-space:pre;transform:scaleY(0.91);transform-origin:0 12.12px;">400.00</div>
<div style="left:-3.70px;top:477.04px;font-family:'Liberation Mono', monospace;font-size:16.67px;line-height:16.67px;color:#56647f;font-weight:normal;white-space:pre;transform:scaleY(0.91);transform-origin:0 12.12px;">sulting Service description 9</div>
<div style="left:716.30px;top:477.04px;font-family:'Liberation Mono', monospace;font-size:16.67px;line-height:16.67px;color:#56647f;font-weight:normal;white-space:pre;transform:scaleY(0.91);transform-origin:0 12.12px;">9</div>
<div style="left:836.30px;top:477.04px;font-family:'Liberation Mono', monospace;font-size:16.67px;line-height:16.67px;color:#e6edf5;font-weight:normal;white-space:pre;transform:scaleY(0.91);transform-origin:0 12.12px;">50.00</div>
<div style="left:916.30px;top:477.04px;font-family:'Liberation Mono', monospace;font-size:16.67px;line-height:16.67px;color:#56647f;font-weight:normal;white-space:pre;transform:scaleY(0.91);transform-origin:0 12.12px;">450.00</div>
<div style="left:-3.70px;top:510.81px;font-family:'Liberation Mono', monospace;font-size:16.67px;line-height:16.67px;color:#56647f;font-weight:normal;white-space:pre;transform:scaleY(0.91);transform-origin:0 12.12px;">sulting Service description 10</div>
<div style="left:696.30px;top:510.81px;font-family:'Liberation Mono', monospace;font-size:16.67px;line-height:16.67px;color:#56647f;font-weight:normal;white-space:pre;transform:scaleY(0.91);transform-origin:0 12.12px;">10</div>
<div style="left:836.30px;top:510.81px;font-family:'Liberation Mono', monospace;font-size:16.67px;line-height:16.67px;color:#e6edf5;font-weight:normal;white-space:pre;transform:scaleY(0.91);transform-origin:0 12.12px;">50.00</div>
<div style="left:916.30px;top:510.81px;font-family:'Liberation Mono', monospace;font-size:16.67px;line-height:16.67px;color:#56647f;font-weight:normal;white-space:pre;transform:scaleY(0.91);transform-origin:0 12.12px;">500.00</div>
<div style="left:-3.70px;top:544.58px;font-family:'Liberation Mono', monospace;font-size:16.67px;line-height:16.67px;color:#56647f;font-weight:normal;white-space:pre;transform:scaleY(0.91);transform-origin:0 12.12px;">sulting Service description 11</div>
<div style="left:696.30px;top:544.58px;font-family:'Liberation Mono', monospace;font-size:16.67px;line-height:16.67px;color:#56647f;font-weight:normal;white-space:pre;transform:scaleY(0.91);transform-origin:0 12.12px;">11</div>
<div style="left:836.30px;top:544.58px;font-family:'Liberation Mono', monospace;font-size:16.67px;line-height:16.67px;color:#e6edf5;font-weight:normal;white-space:pre;transform:scaleY(0.91);transform-origin:0 12.12px;">1150.00</div>
<div style="left:906.30px;top:544.58px;font-family:'Liberation Mono', monospace;font-size:16.67px;line-height:16.67px;color:#56647f;font-weight:normal;white-space:pre;transform:scaleY(0.91);transform-origin:0 12.12px;">12650.00</div>
<div style="left:-3.70px;top:578.35px;font-family:'Liberation Mono', monospace;font-size:16.67px;line-height:16.67px;color:#56647f;font-weight:normal;white-space:pre;transform:scaleY(0.91);transform-origin:0 12.12px;">sulting Service description 12</div>
<div style="left:696.30px;top:578.35px;font-family:'Liberation Mono', monospace;font-size:16.67px;line-height:16.67px;color:#56647f;font-weight:normal;white-space:pre;transform:scaleY(0.91);transform-origin:0 12.12px;">12</div>
<div style="left:836.30px;top:578.35px;font-family:'Liberation Mono', monospace;font-size:16.67px;line-height:16.67px;color:#e6edf5;font-weight:normal;white-space:pre;transform:scaleY(0.91);transform-origin:0 12.12px;">50.00</div>
<div style="left:916.30px;top:578.35px;font-family:'Liberation Mono', monospace;font-size:16.67px;line-height:16.67px;color:#56647f;font-weight:normal;white-space:pre;transform:scaleY(0.91);transform-origin:0 12.12px;">600.00</div>
<div style="left:-3.70px;top:612.12px;font-family:'Liberation Mono', monospace;font-size:16.67px;line-height:16.67px;color:#56647f;font-weight:normal;white-space:pre;transform:scaleY(0.91);transform-origin:0 12.12px;">sulting Service description 13</div>
<div style="left:696.30px;top:612.12px;font-family:'Liberation Mono', monospace;font-size:16.67px;line-height:16.67px;color:#56647f;font-weight:normal;white-space:pre;transform:scaleY(0.91);transform-origin:0 12.12px;">13</div>
<div style="left:836.30px;top:612.12px;font-family:'Liberation Mono', monospace;font-size:16.67px;line-height:16.67px;color:#e6edf5;font-weight:normal;white-space:pre;transform:scaleY(0.91);transform-origin:0 12.12px;">50.00</div>
<div style="left:916.30px;top:612.12px;font-family:'Liberation Mono', monospace;font-size:16.67px;line-height:16.67px;color:#56647f;font-weight:normal;white-space:pre;transform:scaleY(0.91);transform-origin:0 12.12px;">650.00</div>
<div style="left:-3.70px;top:645.89px;font-family:'Liberation Mono', monospace;font-size:16.67px;line-height:16.67px;color:#56647f;font-weight:normal;white-space:pre;transform:scaleY(0.91);transform-origin:0 12.12px;">sulting Service description 14</div>
<div style="left:696.30px;top:645.89px;font-family:'Liberation Mono', monospace;font-size:16.67px;line-height:16.67px;color:#56647f;font-weight:normal;white-space:pre;transform:scaleY(0.91);transform-origin:0 12.12px;">14</div>
<div style="left:836.30px;top:645.89px;font-family:'Liberation Mono', monospace;font-size:16.67px;line-height:16.67px;color:#e6edf5;font-weight:normal;white-space:pre;transform:scaleY(0.91);transform-origin:0 12.12px;">50.00</div>
<div style="left:916.30px;top:645.89px;font-family:'Liberation Mono', monospace;font-size:16.67px;line-height:16.67px;color:#56647f;font-weight:normal;white-space:pre;transform:scaleY(0.91);transform-origin:0 12.12px;">700.00</div>
<div style="left:-3.70px;top:679.66px;font-family:'Liberation Mono', monospace;font-size:16.67px;line-height:16.67px;color:#56647f;font-weight:normal;white-space:pre;transform:scaleY(0.91);transform-origin:0 12.12px;">sulting Service description 15</div>
<div style="left:696.30px;top:679.66px;font-family:'Liberation Mono', monospace;font-size:16.67px;line-height:16.67px;color:#56647f;font-weight:normal;white-space:pre;transform:scaleY(0.91);transform-origin:0 12.12px;">15</div>
<div style="left:836.30px;top:679.66px;font-family:'Liberation Mono', monospace;font-size:16.67px;line-height:16.67px;color:#e6edf5;font-weight:normal;white-space:pre;transform:scaleY(0.91);transform-origin:0 12.12px;">50.00</div>
<div style="left:916.30px;top:679.66px;font-family:'Liberation Mono', monospace;font-size:16.67px;line-height:16.67px;color:#56647f;font-weight:normal;white-space:pre;transform:scaleY(0.91);transform-origin:0 12.12px;">750.00</div>
<div style="left:-3.70px;top:713.43px;font-family:'Liberation Mono', monospace;font-size:16.67px;line-height:16.67px;color:#56647f;font-weight:normal;white-space:pre;transform:scaleY(0.91);transform-origin:0 12.12px;">sulting Service description 16</div>
<div style="left:696.30px;top:713.43px;font-family:'Liberation Mono', monospace;font-size:16.67px;line-height:16.67px;color:#56647f;font-weight:normal;white-space:pre;transform:scaleY(0.91);transform-origin:0 12.12px;">16</div>
<div style="left:836.30px;top:713.43px;font-family:'Liberation Mono', monospace;font-size:16.67px;line-height:16.67px;color:#e6edf5;font-weight:normal;white-space:pre;transform:scaleY(0.91);transform-origin:0 12.12px;">50.00</div>
<div style="left:916.30px;top:713.43px;font-family:'Liberation Mono', monospace;font-size:16.67px;line-height:16.67px;color:#56647f;font-weight:normal;white-space:pre;transform:scaleY(0.91);transform-origin:0 12.12px;">800.00</div>
</div>
<div style="left:360px;top:243px;width:67px;height:718px;overflow:hidden;">
<div style="left:0;top:4.26px;width:65.5px;text-align:right;font-family:'Liberation Mono', monospace;font-size:16.67px;line-height:16.67px;color:#3c3c3c;font-weight:normal;-webkit-text-stroke:0.15px #3c3c3c;transform:scaleY(0.91);transform-origin:0 12.12px;">13</div>
<div style="left:0;top:38.03px;width:65.5px;text-align:right;font-family:'Liberation Mono', monospace;font-size:16.67px;line-height:16.67px;color:#3c3c3c;font-weight:normal;-webkit-text-stroke:0.15px #3c3c3c;transform:scaleY(0.91);transform-origin:0 12.12px;">14</div>
<div style="left:0;top:71.80px;width:65.5px;text-align:right;font-family:'Liberation Mono', monospace;font-size:16.67px;line-height:16.67px;color:#3c3c3c;font-weight:normal;-webkit-text-stroke:0.15px #3c3c3c;transform:scaleY(0.91);transform-origin:0 12.12px;">15</div>
<div style="left:0;top:105.57px;width:65.5px;text-align:right;font-family:'Liberation Mono', monospace;font-size:16.67px;line-height:16.67px;color:#3c3c3c;font-weight:normal;-webkit-text-stroke:0.15px #3c3c3c;transform:scaleY(0.91);transform-origin:0 12.12px;">16</div>
<div style="left:0;top:139.34px;width:65.5px;text-align:right;font-family:'Liberation Mono', monospace;font-size:16.67px;line-height:16.67px;color:#3c3c3c;font-weight:normal;-webkit-text-stroke:0.15px #3c3c3c;transform:scaleY(0.91);transform-origin:0 12.12px;">17</div>
<div style="left:0;top:173.11px;width:65.5px;text-align:right;font-family:'Liberation Mono', monospace;font-size:16.67px;line-height:16.67px;color:#3c3c3c;font-weight:normal;-webkit-text-stroke:0.15px #3c3c3c;transform:scaleY(0.91);transform-origin:0 12.12px;">18</div>
<div style="left:0;top:206.88px;width:65.5px;text-align:right;font-family:'Liberation Mono', monospace;font-size:16.67px;line-height:16.67px;color:#3c3c3c;font-weight:normal;-webkit-text-stroke:0.15px #3c3c3c;transform:scaleY(0.91);transform-origin:0 12.12px;">19</div>
<div style="left:0;top:240.65px;width:65.5px;text-align:right;font-family:'Liberation Mono', monospace;font-size:16.67px;line-height:16.67px;color:#3c3c3c;font-weight:normal;-webkit-text-stroke:0.15px #3c3c3c;transform:scaleY(0.91);transform-origin:0 12.12px;">20</div>
<div style="left:0;top:274.42px;width:65.5px;text-align:right;font-family:'Liberation Mono', monospace;font-size:16.67px;line-height:16.67px;color:#3c3c3c;font-weight:normal;-webkit-text-stroke:0.15px #3c3c3c;transform:scaleY(0.91);transform-origin:0 12.12px;">21</div>
<div style="left:0;top:308.19px;width:65.5px;text-align:right;font-family:'Liberation Mono', monospace;font-size:16.67px;line-height:16.67px;color:#3c3c3c;font-weight:normal;-webkit-text-stroke:0.15px #3c3c3c;transform:scaleY(0.91);transform-origin:0 12.12px;">22</div>
<div style="left:0;top:341.96px;width:65.5px;text-align:right;font-family:'Liberation Mono', monospace;font-size:16.67px;line-height:16.67px;color:#3c3c3c;font-weight:normal;-webkit-text-stroke:0.15px #3c3c3c;transform:scaleY(0.91);transform-origin:0 12.12px;">23</div>
<div style="left:0;top:375.73px;width:65.5px;text-align:right;font-family:'Liberation Mono', monospace;font-size:16.67px;line-height:16.67px;color:#3c3c3c;font-weight:normal;-webkit-text-stroke:0.15px #3c3c3c;transform:scaleY(0.91);transform-origin:0 12.12px;">24</div>
<div style="left:0;top:409.50px;width:65.5px;text-align:right;font-family:'Liberation Mono', monospace;font-size:16.67px;line-height:16.67px;color:#3c3c3c;font-weight:normal;-webkit-text-stroke:0.15px #3c3c3c;transform:scaleY(0.91);transform-origin:0 12.12px;">25</div>
<div style="left:0;top:443.27px;width:65.5px;text-align:right;font-family:'Liberation Mono', monospace;font-size:16.67px;line-height:16.67px;color:#3c3c3c;font-weight:normal;-webkit-text-stroke:0.15px #3c3c3c;transform:scaleY(0.91);transform-origin:0 12.12px;">26</div>
<div style="left:0;top:477.04px;width:65.5px;text-align:right;font-family:'Liberation Mono', monospace;font-size:16.67px;line-height:16.67px;color:#3c3c3c;font-weight:normal;-webkit-text-stroke:0.15px #3c3c3c;transform:scaleY(0.91);transform-origin:0 12.12px;">27</div>
<div style="left:0;top:510.81px;width:65.5px;text-align:right;font-family:'Liberation Mono', monospace;font-size:16.67px;line-height:16.67px;color:#3c3c3c;font-weight:normal;-webkit-text-stroke:0.15px #3c3c3c;transform:scaleY(0.91);transform-origin:0 12.12px;">28</div>
<div style="left:0;top:544.58px;width:65.5px;text-align:right;font-family:'Liberation Mono', monospace;font-size:16.67px;line-height:16.67px;color:#3c3c3c;font-weight:normal;-webkit-text-stroke:0.15px #3c3c3c;transform:scaleY(0.91);transform-origin:0 12.12px;">29</div>
<div style="left:0;top:578.35px;width:65.5px;text-align:right;font-family:'Liberation Mono', monospace;font-size:16.67px;line-height:16.67px;color:#3c3c3c;font-weight:normal;-webkit-text-stroke:0.15px #3c3c3c;transform:scaleY(0.91);transform-origin:0 12.12px;">30</div>
<div style="left:0;top:612.12px;width:65.5px;text-align:right;font-family:'Liberation Mono', monospace;font-size:16.67px;line-height:16.67px;color:#3c3c3c;font-weight:normal;-webkit-text-stroke:0.15px #3c3c3c;transform:scaleY(0.91);transform-origin:0 12.12px;">31</div>
<div style="left:0;top:645.89px;width:65.5px;text-align:right;font-family:'Liberation Mono', monospace;font-size:16.67px;line-height:16.67px;color:#3c3c3c;font-weight:normal;-webkit-text-stroke:0.15px #3c3c3c;transform:scaleY(0.91);transform-origin:0 12.12px;">32</div>
<div style="left:0;top:679.66px;width:65.5px;text-align:right;font-family:'Liberation Mono', monospace;font-size:16.67px;line-height:16.67px;color:#3c3c3c;font-weight:normal;-webkit-text-stroke:0.15px #3c3c3c;transform:scaleY(0.91);transform-origin:0 12.12px;">33</div>
<div style="left:0;top:713.43px;width:65.5px;text-align:right;font-family:'Liberation Mono', monospace;font-size:16.67px;line-height:16.67px;color:#3c3c3c;font-weight:normal;-webkit-text-stroke:0.15px #3c3c3c;transform:scaleY(0.91);transform-origin:0 12.12px;">34</div>
</div>
<div style="left:360px;top:961px;width:1100px;height:21px;background:#efefef;"></div>
<div style="left:407px;top:962px;width:769px;height:19px;background:#cdcdcd;"></div>
<svg style="position:absolute;left:365px;top:966px;" width="9" height="11" viewBox="0 0 9 11"><path d="M7 1 L2 5.5 L7 10" stroke="#555" stroke-width="1.8" fill="none"/></svg>
<svg style="position:absolute;left:1424px;top:966px;" width="9" height="11" viewBox="0 0 9 11"><path d="M2 1 L7 5.5 L2 10" stroke="#555" stroke-width="1.8" fill="none"/></svg>
<div style="left:360px;top:981px;width:1100px;height:2px;background:#a9a9a9;"></div>
<div style="left:360px;top:983px;width:1100px;height:34px;background:#eff0f5;"></div>
<div style="left:1024px;top:988px;width:155px;height:25px;background:#f6f7fa;border:1px solid #c8c8c8;border-right:none;border-bottom:none;"></div>
<div style="left:1028px;top:994.24px;font-family:'Liberation Sans', sans-serif;font-size:14.3px;line-height:14.3px;color:#2323d8;font-weight:normal;white-space:pre;">DescriptionInvoice.txt</div>
<div style="left:1182px;top:987px;width:1px;height:27px;background:#a0a0a0;"></div>
<div style="left:1185px;top:994.24px;font-family:'Liberation Sans', sans-serif;font-size:14.3px;line-height:14.3px;color:#333;font-weight:normal;white-space:pre;">Line:</div>
<div style="left:1229px;top:994.24px;font-family:'Liberation Sans', sans-serif;font-size:14.3px;line-height:14.3px;color:#333;font-weight:bold;white-space:pre;">31</div>
<div style="left:1253px;top:987px;width:1px;height:27px;background:#a0a0a0;"></div>
<div style="left:1256px;top:994.24px;font-family:'Liberation Sans', sans-serif;font-size:14.3px;line-height:14.3px;color:#333;font-weight:normal;white-space:pre;">Col:</div>
<div style="left:1296px;top:994.24px;font-family:'Liberation Sans', sans-serif;font-size:14.3px;line-height:14.3px;color:#333;font-weight:bold;white-space:pre;">89</div>
<div style="left:1322px;top:987px;width:1px;height:27px;background:#a0a0a0;"></div>
<svg style="position:absolute;left:1328px;top:992px;" width="19" height="19" viewBox="0 0 19 19"><circle cx="7.5" cy="7.5" r="5.5" fill="none" stroke="#444" stroke-width="1.8"/><path d="M11.5 11.5 L17 17" stroke="#444" stroke-width="2.6"/><path d="M4.5 7.5 H10.5" stroke="#444" stroke-width="1.6"/></svg>
<svg style="position:absolute;left:1357px;top:992px;" width="19" height="19" viewBox="0 0 19 19"><circle cx="7.5" cy="7.5" r="5.5" fill="none" stroke="#444" stroke-width="1.8"/><path d="M11.5 11.5 L17 17" stroke="#444" stroke-width="2.6"/><path d="M4.5 7.5 H10.5 M7.5 4.5 V10.5" stroke="#444" stroke-width="1.6"/></svg>
<div style="left:1384px;top:988px;width:44px;height:25px;background:#ffffff;"></div>
<div style="left:1388px;top:994.24px;font-family:'Liberation Sans', sans-serif;font-size:14.3px;line-height:14.3px;color:#333;font-weight:normal;white-space:pre;">100%</div>
<svg style="position:absolute;left:1429px;top:999px;" width="8" height="5" viewBox="0 0 8 5"><path d="M0 0 H7 L3.5 4 Z" fill="#222"/></svg>
<div style="left:1470px;top:118px;width:443px;height:864px;background:#ffffff;border:1.5px solid #c4c4c4;"></div>
<div style="left:1471px;top:119px;width:441px;height:26px;background:#efefef;"></div>
<div style="left:1475.5px;top:124.26px;font-family:'Liberation Sans', sans-serif;font-size:14.4px;line-height:14.4px;color:#3a3a3a;font-weight:normal;white-space:pre;">Field Properties</div>
<svg style="position:absolute;left:1583px;top:129px;" width="271" height="8" viewBox="0 0 271 8"><rect x="0" y="0.0" width="1.6" height="1.6" fill="#9a9a9a"/><rect x="5" y="0.0" width="1.6" height="1.6" fill="#9a9a9a"/><rect x="10" y="0.0" width="1.6" height="1.6" fill="#9a9a9a"/><rect x="15" y="0.0" width="1.6" height="1.6" fill="#9a9a9a"/><rect x="20" y="0.0" width="1.6" height="1.6" fill="#9a9a9a"/><rect x="25" y="0.0" width="1.6" height="1.6" fill="#9a9a9a"/><rect x="30" y="0.0" width="1.6" height="1.6" fill="#9a9a9a"/><rect x="35" y="0.0" width="1.6" height="1.6" fill="#9a9a9a"/><rect x="40" y="0.0" width="1.6" height="1.6" fill="#9a9a9a"/><rect x="45" y="0.0" width="1.6" height="1.6" fill="#9a9a9a"/><rect x="50" y="0.0" width="1.6" height="1.6" fill="#9a9a9a"/><rect x="55" y="0.0" width="1.6" height="1.6" fill="#9a9a9a"/><rect x="60" y="0.0" width="1.6" height="1.6" fill="#9a9a9a"/><rect x="65" y="0.0" width="1.6" height="1.6" fill="#9a9a9a"/><rect x="70" y="0.0" width="1.6" height="1.6" fill="#9a9a9a"/><rect x="75" y="0.0" width="1.6" height="1.6" fill="#9a9a9a"/><rect x="80" y="0.0" width="1.6" height="1.6" fill="#9a9a9a"/><rect x="85" y="0.0" width="1.6" height="1.6" fill="#9a9a9a"/><rect x="90" y="0.0" width="1.6" height="1.6" fill="#9a9a9a"/><rect x="95" y="0.0" width="1.6" height="1.6" fill="#9a9a9a"/><rect x="100" y="0.0" width="1.6" height="1.6" fill="#9a9a9a"/><rect x="105" y="0.0" width="1.6" height="1.6" fill="#9a9a9a"/><rect x="110" y="0.0" width="1.6" height="1.6" fill="#9a9a9a"/><rect x="115" y="0.0" width="1.6" height="1.6" fill="#9a9a9a"/><rect x="120" y="0.0" width="1.6" height="1.6" fill="#9a9a9a"/><rect x="125" y="0.0" width="1.6" height="1.6" fill="#9a9a9a"/><rect x="130" y="0.0" width="1.6" height="1.6" fill="#9a9a9a"/><rect x="135" y="0.0" width="1.6" height="1.6" fill="#9a9a9a"/><rect x="140" y="0.0" width="1.6" height="1.6" fill="#9a9a9a"/><rect x="145" y="0.0" width="1.6" height="1.6" fill="#9a9a9a"/><rect x="150" y="0.0" width="1.6" height="1.6" fill="#9a9a9a"/><rect x="155" y="0.0" width="1.6" height="1.6" fill="#9a9a9a"/><rect x="160" y="0.0" width="1.6" height="1.6" fill="#9a9a9a"/><rect x="165" y="0.0" width="1.6" height="1.6" fill="#9a9a9a"/><rect x="170" y="0.0" width="1.6" height="1.6" fill="#9a9a9a"/><rect x="175" y="0.0" width="1.6" height="1.6" fill="#9a9a9a"/><rect x="180" y="0.0" width="1.6" height="1.6" fill="#9a9a9a"/><rect x="185" y="0.0" width="1.6" height="1.6" fill="#9a9a9a"/><rect x="190" y="0.0" width="1.6" height="1.6" fill="#9a9a9a"/><rect x="195" y="0.0" width="1.6" height="1.6" fill="#9a9a9a"/><rect x="200" y="0.0" width="1.6" height="1.6" fill="#9a9a9a"/><rect x="205" y="0.0" width="1.6" height="1.6" fill="#9a9a9a"/><rect x="210" y="0.0" width="1.6" height="1.6" fill="#9a9a9a"/><rect x="215" y="0.0" width="1.6" height="1.6" fill="#9a9a9a"/><rect x="220" y="0.0" width="1.6" height="1.6" fill="#9a9a9a"/><rect x="225" y="0.0" width="1.6" height="1.6" fill="#9a9a9a"/><rect x="230" y="0.0" width="1.6" height="1.6" fill="#9a9a9a"/><rect x="235" y="0.0" width="1.6" height="1.6" fill="#9a9a9a"/><rect x="240" y="0.0" width="1.6" height="1.6" fill="#9a9a9a"/><rect x="245" y="0.0" width="1.6" height="1.6" fill="#9a9a9a"/><rect x="250" y="0.0" width="1.6" height="1.6" fill="#9a9a9a"/><rect x="255" y="0.0" width="1.6" height="1.6" fill="#9a9a9a"/><rect x="260" y="0.0" width="1.6" height="1.6" fill="#9a9a9a"/><rect x="265" y="0.0" width="1.6" height="1.6" fill="#9a9a9a"/><rect x="2.5" y="2.5" width="1.6" height="1.6" fill="#9a9a9a"/><rect x="7.5" y="2.5" width="1.6" height="1.6" fill="#9a9a9a"/><rect x="12.5" y="2.5" width="1.6" height="1.6" fill="#9a9a9a"/><rect x="17.5" y="2.5" width="1.6" height="1.6" fill="#9a9a9a"/><rect x="22.5" y="2.5" width="1.6" height="1.6" fill="#9a9a9a"/><rect x="27.5" y="2.5" width="1.6" height="1.6" fill="#9a9a9a"/><rect x="32.5" y="2.5" width="1.6" height="1.6" fill="#9a9a9a"/><rect x="37.5" y="2.5" width="1.6" height="1.6" fill="#9a9a9a"/><rect x="42.5" y="2.5" width="1.6" height="1.6" fill="#9a9a9a"/><rect x="47.5" y="2.5" width="1.6" height="1.6" fill="#9a9a9a"/><rect x="52.5" y="2.5" width="1.6" height="1.6" fill="#9a9a9a"/><rect x="57.5" y="2.5" width="1.6" height="1.6" fill="#9a9a9a"/><rect x="62.5" y="2.5" width="1.6" height="1.6" fill="#9a9a9a"/><rect x="67.5" y="2.5" width="1.6" height="1.6" fill="#9a9a9a"/><rect x="72.5" y="2.5" width="1.6" height="1.6" fill="#9a9a9a"/><rect x="77.5" y="2.5" width="1.6" height="1.6" fill="#9a9a9a"/><rect x="82.5" y="2.5" width="1.6" height="1.6" fill="#9a9a9a"/><rect x="87.5" y="2.5" width="1.6" height="1.6" fill="#9a9a9a"/><rect x="92.5" y="2.5" width="1.6" height="1.6" fill="#9a9a9a"/><rect x="97.5" y="2.5" width="1.6" height="1.6" fill="#9a9a9a"/><rect x="102.5" y="2.5" width="1.6" height="1.6" fill="#9a9a9a"/><rect x="107.5" y="2.5" width="1.6" height="1.6" fill="#9a9a9a"/><rect x="112.5" y="2.5" width="1.6" height="1.6" fill="#9a9a9a"/><rect x="117.5" y="2.5" width="1.6" height="1.6" fill="#9a9a9a"/><rect x="122.5" y="2.5" width="1.6" height="1.6" fill="#9a9a9a"/><rect x="127.5" y="2.5" width="1.6" height="1.6" fill="#9a9a9a"/><rect x="132.5" y="2.5" width="1.6" height="1.6" fill="#9a9a9a"/><rect x="137.5" y="2.5" width="1.6" height="1.6" fill="#9a9a9a"/><rect x="142.5" y="2.5" width="1.6" height="1.6" fill="#9a9a9a"/><rect x="147.5" y="2.5" width="1.6" height="1.6" fill="#9a9a9a"/><rect x="152.5" y="2.5" width="1.6" height="1.6" fill="#9a9a9a"/><rect x="157.5" y="2.5" width="1.6" height="1.6" fill="#9a9a9a"/><rect x="162.5" y="2.5" width="1.6" height="1.6" fill="#9a9a9a"/><rect x="167.5" y="2.5" width="1.6" height="1.6" fill="#9a9a9a"/><rect x="172.5" y="2.5" width="1.6" height="1.6" fill="#9a9a9a"/><rect x="177.5" y="2.5" width="1.6" height="1.6" fill="#9a9a9a"/><rect x="182.5" y="2.5" width="1.6" height="1.6" fill="#9a9a9a"/><rect x="187.5" y="2.5" width="1.6" height="1.6" fill="#9a9a9a"/><rect x="192.5" y="2.5" width="1.6" height="1.6" fill="#9a9a9a"/><rect x="197.5" y="2.5" width="1.6" height="1.6" fill="#9a9a9a"/><rect x="202.5" y="2.5" width="1.6" height="1.6" fill="#9a9a9a"/><rect x="207.5" y="2.5" width="1.6" height="1.6" fill="#9a9a9a"/><rect x="212.5" y="2.5" width="1.6" height="1.6" fill="#9a9a9a"/><rect x="217.5" y="2.5" width="1.6" height="1.6" fill="#9a9a9a"/><rect x="222.5" y="2.5" width="1.6" height="1.6" fill="#9a9a9a"/><rect x="227.5" y="2.5" width="1.6" height="1.6" fill="#9a9a9a"/><rect x="232.5" y="2.5" width="1.6" height="1.6" fill="#9a9a9a"/><rect x="237.5" y="2.5" width="1.6" height="1.6" fill="#9a9a9a"/><rect x="242.5" y="2.5" width="1.6" height="1.6" fill="#9a9a9a"/><rect x="247.5" y="2.5" width="1.6" height="1.6" fill="#9a9a9a"/><rect x="252.5" y="2.5" width="1.6" height="1.6" fill="#9a9a9a"/><rect x="257.5" y="2.5" width="1.6" height="1.6" fill="#9a9a9a"/><rect x="262.5" y="2.5" width="1.6" height="1.6" fill="#9a9a9a"/><rect x="267.5" y="2.5" width="1.6" height="1.6" fill="#9a9a9a"/><rect x="0" y="5.0" width="1.6" height="1.6" fill="#9a9a9a"/><rect x="5" y="5.0" width="1.6" height="1.6" fill="#9a9a9a"/><rect x="10" y="5.0" width="1.6" height="1.6" fill="#9a9a9a"/><rect x="15" y="5.0" width="1.6" height="1.6" fill="#9a9a9a"/><rect x="20" y="5.0" width="1.6" height="1.6" fill="#9a9a9a"/><rect x="25" y="5.0" width="1.6" height="1.6" fill="#9a9a9a"/><rect x="30" y="5.0" width="1.6" height="1.6" fill="#9a9a9a"/><rect x="35" y="5.0" width="1.6" height="1.6" fill="#9a9a9a"/><rect x="40" y="5.0" width="1.6" height="1.6" fill="#9a9a9a"/><rect x="45" y="5.0" width="1.6" height="1.6" fill="#9a9a9a"/><rect x="50" y="5.0" width="1.6" height="1.6" fill="#9a9a9a"/><rect x="55" y="5.0" width="1.6" height="1.6" fill="#9a9a9a"/><rect x="60" y="5.0" width="1.6" height="1.6" fill="#9a9a9a"/><rect x="65" y="5.0" width="1.6" height="1.6" fill="#9a9a9a"/><rect x="70" y="5.0" width="1.6" height="1.6" fill="#9a9a9a"/><rect x="75" y="5.0" width="1.6" height="1.6" fill="#9a9a9a"/><rect x="80" y="5.0" width="1.6" height="1.6" fill="#9a9a9a"/><rect x="85" y="5.0" width="1.6" height="1.6" fill="#9a9a9a"/><rect x="90" y="5.0" width="1.6" height="1.6" fill="#9a9a9a"/><rect x="95" y="5.0" width="1.6" height="1.6" fill="#9a9a9a"/><rect x="100" y="5.0" width="1.6" height="1.6" fill="#9a9a9a"/><rect x="105" y="5.0" width="1.6" height="1.6" fill="#9a9a9a"/><rect x="110" y="5.0" width="1.6" height="1.6" fill="#9a9a9a"/><rect x="115" y="5.0" width="1.6" height="1.6" fill="#9a9a9a"/><rect x="120" y="5.0" width="1.6" height="1.6" fill="#9a9a9a"/><rect x="125" y="5.0" width="1.6" height="1.6" fill="#9a9a9a"/><rect x="130" y="5.0" width="1.6" height="1.6" fill="#9a9a9a"/><rect x="135" y="5.0" width="1.6" height="1.6" fill="#9a9a9a"/><rect x="140" y="5.0" width="1.6" height="1.6" fill="#9a9a9a"/><rect x="145" y="5.0" width="1.6" height="1.6" fill="#9a9a9a"/><rect x="150" y="5.0" width="1.6" height="1.6" fill="#9a9a9a"/><rect x="155" y="5.0" width="1.6" height="1.6" fill="#9a9a9a"/><rect x="160" y="5.0" width="1.6" height="1.6" fill="#9a9a9a"/><rect x="165" y="5.0" width="1.6" height="1.6" fill="#9a9a9a"/><rect x="170" y="5.0" width="1.6" height="1.6" fill="#9a9a9a"/><rect x="175" y="5.0" width="1.6" height="1.6" fill="#9a9a9a"/><rect x="180" y="5.0" width="1.6" height="1.6" fill="#9a9a9a"/><rect x="185" y="5.0" width="1.6" height="1.6" fill="#9a9a9a"/><rect x="190" y="5.0" width="1.6" height="1.6" fill="#9a9a9a"/><rect x="195" y="5.0" width="1.6" height="1.6" fill="#9a9a9a"/><rect x="200" y="5.0" width="1.6" height="1.6" fill="#9a9a9a"/><rect x="205" y="5.0" width="1.6" height="1.6" fill="#9a9a9a"/><rect x="210" y="5.0" width="1.6" height="1.6" fill="#9a9a9a"/><rect x="215" y="5.0" width="1.6" height="1.6" fill="#9a9a9a"/><rect x="220" y="5.0" width="1.6" height="1.6" fill="#9a9a9a"/><rect x="225" y="5.0" width="1.6" height="1.6" fill="#9a9a9a"/><rect x="230" y="5.0" width="1.6" height="1.6" fill="#9a9a9a"/><rect x="235" y="5.0" width="1.6" height="1.6" fill="#9a9a9a"/><rect x="240" y="5.0" width="1.6" height="1.6" fill="#9a9a9a"/><rect x="245" y="5.0" width="1.6" height="1.6" fill="#9a9a9a"/><rect x="250" y="5.0" width="1.6" height="1.6" fill="#9a9a9a"/><rect x="255" y="5.0" width="1.6" height="1.6" fill="#9a9a9a"/><rect x="260" y="5.0" width="1.6" height="1.6" fill="#9a9a9a"/><rect x="265" y="5.0" width="1.6" height="1.6" fill="#9a9a9a"/></svg>
<svg style="position:absolute;left:1859px;top:130px;" width="12" height="7" viewBox="0 0 12 7"><path d="M0 0 H11 L5.5 6 Z" fill="#333"/></svg>
<svg style="position:absolute;left:1878px;top:126px;" width="11" height="13" viewBox="0 0 11 13"><path d="M3 1 H8 V7 H10 V8 H1 V7 H3 Z M5.5 8 V12" stroke="#333" stroke-width="1.4" fill="none"/><rect x="5" y="1" width="3" height="6" fill="#333"/></svg>
<svg style="position:absolute;left:1895px;top:125px;" width="13" height="13" viewBox="0 0 13 13"><path d="M1.5 1.5 L11.5 11.5 M11.5 1.5 L1.5 11.5" stroke="#333" stroke-width="2.4"/></svg>
<div style="left:1891px;top:145px;width:20px;height:836px;background:#f0f0f0;"></div>
<div style="left:1892px;top:266px;width:18px;height:689px;background:#cbcbcb;"></div>
<svg style="position:absolute;left:1896px;top:153px;" width="11" height="8" viewBox="0 0 11 8"><path d="M1 7 L5.5 2 L10 7" stroke="#555" stroke-width="1.8" fill="none"/></svg>
<svg style="position:absolute;left:1896px;top:966px;" width="11" height="8" viewBox="0 0 11 8"><path d="M1 1 L5.5 6 L10 1" stroke="#555" stroke-width="1.8" fill="none"/></svg>
<div style="left:1471px;top:145px;width:420px;height:835px;overflow:hidden;">
<div style="left:10.5px;top:-25px;width:399.5px;height:206px;border:1.3px solid #e9e9e9;border-radius:7px;background:#fff;"></div>
<div style="left:151px;top:-15px;width:219px;height:21px;background:#fff;border:1px solid #d9d9d9;"></div>
<div style="left:32px;top:22.80px;font-size:14px;line-height:14px;color:#222;font-weight:normal;white-space:pre;">Data Type</div>
<div style="left:151.5px;top:20.69999999999999px;width:218.5px;height:25.5px;background:#fff;border:1px solid #d9d9d9;"></div>
<div style="left:156.5px;top:26.53px;font-size:14.2px;line-height:14.2px;color:#111;font-weight:normal;white-space:pre;">Real</div>
<svg style="position:absolute;left:354.0px;top:30.44999999999999px" width="12" height="7" viewBox="0 0 12 7"><path d="M1 1 L6 6 L11 1" stroke="#555" stroke-width="1.2" fill="none"/></svg>
<div style="left:32px;top:64.00px;font-size:14px;line-height:14px;color:#222;font-weight:normal;white-space:pre;">Format</div>
<div style="left:151.5px;top:62px;width:218.5px;height:25.5px;background:#e6e6e6;border:1px solid #e6e6e6;"></div>
<svg style="position:absolute;left:354.0px;top:71.75px" width="12" height="7" viewBox="0 0 12 7"><path d="M1 1 L6 6 L11 1" stroke="#555" stroke-width="1.2" fill="none"/></svg>
<div style="left:33px;top:105.50px;font-size:14px;line-height:14px;color:#222;font-weight:normal;white-space:pre;">Composite Type</div>
<div style="left:151.5px;top:103px;width:218.5px;height:25.5px;background:#fff;border:1px solid #d9d9d9;"></div>
<div style="left:156.5px;top:108.83px;font-size:14.2px;line-height:14.2px;color:#111;font-weight:normal;white-space:pre;">None</div>
<svg style="position:absolute;left:354.0px;top:112.75px" width="12" height="7" viewBox="0 0 12 7"><path d="M1 1 L6 6 L11 1" stroke="#555" stroke-width="1.2" fill="none"/></svg>
<div style="left:32px;top:146.50px;font-size:14px;line-height:14px;color:#222;font-weight:normal;white-space:pre;">Value If Null</div>
<div style="left:151.5px;top:144.7px;width:218.5px;height:25.5px;background:#fff;border:1px solid #d9d9d9;"></div>
<div style="left:156.5px;top:150.53px;font-size:14.2px;line-height:14.2px;color:#111;font-weight:normal;white-space:pre;">None</div>
<svg style="position:absolute;left:354.0px;top:154.45px" width="12" height="7" viewBox="0 0 12 7"><path d="M1 1 L6 6 L11 1" stroke="#555" stroke-width="1.2" fill="none"/></svg>
<div style="left:10.5px;top:196px;width:399.5px;height:175px;border:1.3px solid #e9e9e9;border-radius:7px;background:#fff;"></div>
<div style="left:11.5px;top:197px;width:397.5px;height:36px;background:linear-gradient(#edf1f5,#fafbfc);border-radius:6px 6px 0 0;border-bottom:1.3px solid #e9e9e9;"></div>
<div style="left:31.59999999999991px;top:207.50px;font-size:14px;line-height:14px;color:#111;font-weight:bold;white-space:pre;letter-spacing:-0.25px;">Remove Options</div>
<svg style="position:absolute;left:389px;top:210.5px" width="10" height="10" viewBox="0 0 10 10"><path d="M0 0.5 H9.5 L4.75 9.5 Z" fill="#111"/></svg>
<div style="left:33px;top:245.8px;width:40px;height:35.6px;background:#fafafa;border:1.3px solid #e6e6e6;border-radius:6px;"></div>
<div style="left:92px;top:245.8px;width:40px;height:35.6px;background:#fafafa;border:1.3px solid #e6e6e6;border-radius:6px;"></div>
<div style="left:150.5px;top:245.8px;width:40px;height:35.6px;background:#fafafa;border:1.3px solid #e6e6e6;border-radius:6px;"></div>
<div style="left:150.5px;top:275px;width:40px;height:6.4px;background:#f39a1e;border-radius:0 0 6px 6px;"></div>
<div style="left:209px;top:245.8px;width:40px;height:35.6px;background:#fafafa;border:1.3px solid #e6e6e6;border-radius:6px;"></div>
<div style="left:209px;top:275px;width:40px;height:6.4px;background:#f39a1e;border-radius:0 0 6px 6px;"></div>
<div style="left:268px;top:245.8px;width:40px;height:35.6px;background:#fafafa;border:1.3px solid #e6e6e6;border-radius:6px;"></div>
<div style="left:326.5px;top:245.8px;width:40px;height:35.6px;background:#fafafa;border:1.3px solid #e6e6e6;border-radius:6px;"></div>
<svg style="position:absolute;left:42px;top:254px" width="22" height="18" viewBox="0 0 22 18"><rect x="2" y="6.5" width="10" height="3" fill="#2f7ac4"/><path d="M13 4 L19 12 M19 4 L13 12" stroke="#2f7ac4" stroke-width="2"/></svg>
<svg style="position:absolute;left:101px;top:254px" width="22" height="18" viewBox="0 0 22 18"><circle cx="4" cy="9.8" r="2.7" fill="#2f7ac4"/><circle cx="10" cy="9.8" r="2.7" fill="#2f7ac4"/><path d="M1.6 9.5 Q1.8 5 5.5 3.6 M7.6 9.5 Q7.8 5 11.5 3.6" stroke="#2f7ac4" stroke-width="1.9" fill="none"/><circle cx="16.5" cy="10.3" r="2" fill="#2f7ac4"/><path d="M18.3 10.3 Q18.5 13.5 15.8 15" stroke="#2f7ac4" stroke-width="1.6" fill="none"/></svg>
<svg style="position:absolute;left:159.5px;top:254px" width="22" height="18" viewBox="0 0 22 18"><path d="M4 8 H18" stroke="#2f7ac4" stroke-width="2.2"/><path d="M1 8 L6 4 V12 Z M21 8 L16 4 V12 Z" fill="#2f7ac4"/></svg>
<svg style="position:absolute;left:218px;top:254px" width="22" height="18" viewBox="0 0 22 18"><path d="M2 3 V13 M20 3 V13" stroke="#2f7ac4" stroke-width="1.6"/><path d="M6 8 H16" stroke="#2f7ac4" stroke-width="2"/><path d="M4 8 L8 5 V11 Z M18 8 L14 5 V11 Z" fill="#2f7ac4"/></svg>
<svg style="position:absolute;left:277px;top:254px" width="22" height="18" viewBox="0 0 22 18"><path d="M1 8.5 H5 M17 8.5 H21" stroke="#2f7ac4" stroke-width="2.2"/><path d="M7 4 L15 13 M15 4 L7 13" stroke="#2f7ac4" stroke-width="2.2"/></svg>
<svg style="position:absolute;left:335.5px;top:254px" width="22" height="18" viewBox="0 0 22 18"><circle cx="5" cy="8.5" r="2.2" fill="#2f7ac4"/><circle cx="9.6" cy="8.5" r="2.2" fill="#2f7ac4"/><path d="M3 8.3 Q3.2 4.8 6 3.8 M7.6 8.3 Q7.8 4.8 10.6 3.8" stroke="#2f7ac4" stroke-width="1.6" fill="none"/><circle cx="14.6" cy="10.5" r="2.2" fill="#2f7ac4"/><circle cx="19.2" cy="10.5" r="2.2" fill="#2f7ac4"/><path d="M16.6 10.7 Q16.4 14.2 13.6 15.2 M21.2 10.7 Q21 14.2 18.2 15.2" stroke="#2f7ac4" stroke-width="1.6" fill="none"/></svg>
<div style="left:33px;top:308.50px;font-size:14px;line-height:14px;color:#333;font-weight:normal;white-space:pre;">Specific Strings</div>
<div style="left:29px;top:332px;width:331px;height:26.5px;background:#fff;border:1px solid #d9d9d9;"></div>
<div style="left:33px;top:338.00px;font-size:14px;line-height:14px;color:#8a8a8a;font-weight:normal;white-space:pre;">None</div>
<svg style="position:absolute;left:365px;top:336px" width="17" height="17" viewBox="0 0 17 17"><circle cx="8.5" cy="8.5" r="8" fill="#d6d6d6"/><text x="8.5" y="13.5" text-anchor="middle" font-family="Liberation Serif" font-style="italic" font-weight="bold" font-size="13" fill="#fff">i</text></svg>
<div style="left:10.5px;top:386.5px;width:399.5px;height:324.5px;border:1.3px solid #e9e9e9;border-radius:7px;background:#fff;"></div>
<div style="left:11.5px;top:387.5px;width:397.5px;height:36px;background:linear-gradient(#edf1f5,#fafbfc);border-radius:6px 6px 0 0;border-bottom:1.3px solid #e9e9e9;"></div>
<div style="left:31.59999999999991px;top:398.00px;font-size:14px;line-height:14px;color:#111;font-weight:bold;white-space:pre;letter-spacing:-0.25px;">Size and Position</div>
<svg style="position:absolute;left:389px;top:401.0px" width="10" height="10" viewBox="0 0 10 10"><path d="M0 0.5 H9.5 L4.75 9.5 Z" fill="#111"/></svg>
<div style="left:32px;top:437.00px;font-size:14px;line-height:14px;color:#333;font-weight:normal;white-space:pre;">Start Position</div>
<div style="left:29px;top:462.29999999999995px;width:331px;height:25.3px;background:#fff;border:1px solid #d9d9d9;"></div>
<div style="left:34px;top:467.93px;font-size:14.2px;line-height:14.2px;color:#111;font-weight:normal;white-space:pre;">Fixed</div>
<svg style="position:absolute;left:344px;top:471.94999999999993px" width="12" height="7" viewBox="0 0 12 7"><path d="M1 1 L6 6 L11 1" stroke="#555" stroke-width="1.2" fill="none"/></svg>
<div style="left:32px;top:507.50px;font-size:14px;line-height:14px;color:#333;font-weight:normal;white-space:pre;">Line</div>
<div style="left:78px;top:502px;width:97px;height:26.6px;background:#fff;border:1px solid #d9d9d9;"></div>
<div style="left:82px;top:506.00px;font-size:14px;line-height:14px;color:#111;font-weight:normal;white-space:pre;">0</div>
<svg style="position:absolute;left:158px;top:506px" width="12" height="19" viewBox="0 0 12 19"><path d="M1.5 6 L6 1.5 L10.5 6 M1.5 13 L6 17.5 L10.5 13" stroke="#555" stroke-width="1.2" fill="none"/></svg>
<div style="left:187px;top:507.50px;font-size:14px;line-height:14px;color:#333;font-weight:normal;white-space:pre;">Column</div>
<div style="left:258px;top:502px;width:103.5px;height:26.6px;background:#fff;border:1px solid #d9d9d9;"></div>
<div style="left:262px;top:506.00px;font-size:14px;line-height:14px;color:#111;font-weight:normal;white-space:pre;">87</div>
<svg style="position:absolute;left:344.5px;top:506px" width="12" height="19" viewBox="0 0 12 19"><path d="M1.5 6 L6 1.5 L10.5 6 M1.5 13 L6 17.5 L10.5 13" stroke="#555" stroke-width="1.2" fill="none"/></svg>
<div style="left:32px;top:552.00px;font-size:14px;line-height:14px;color:#333;font-weight:normal;white-space:pre;">Length</div>
<div style="left:29px;top:578.6px;width:249.5px;height:25.3px;background:#fff;border:1px solid #d9d9d9;"></div>
<div style="left:34px;top:584.23px;font-size:14.2px;line-height:14.2px;color:#111;font-weight:normal;white-space:pre;">Characters</div>
<svg style="position:absolute;left:262.5px;top:588.25px" width="12" height="7" viewBox="0 0 12 7"><path d="M1 1 L6 6 L11 1" stroke="#555" stroke-width="1.2" fill="none"/></svg>
<div style="left:291.5px;top:578.6px;width:71px;height:26.6px;background:#fff;border:1px solid #d9d9d9;"></div>
<div style="left:295.5px;top:582.60px;font-size:14px;line-height:14px;color:#111;font-weight:normal;white-space:pre;">7</div>
<svg style="position:absolute;left:345.5px;top:582.6px" width="12" height="19" viewBox="0 0 12 19"><path d="M1.5 6 L6 1.5 L10.5 6 M1.5 13 L6 17.5 L10.5 13" stroke="#555" stroke-width="1.2" fill="none"/></svg>
<div style="left:32px;top:633.50px;font-size:14px;line-height:14px;color:#333;font-weight:normal;white-space:pre;">Height</div>
<div style="left:29px;top:657px;width:249.5px;height:25.3px;background:#fff;border:1px solid #d9d9d9;"></div>
<div style="left:34px;top:662.63px;font-size:14.2px;line-height:14.2px;color:#111;font-weight:normal;white-space:pre;">Line Count</div>
<svg style="position:absolute;left:262.5px;top:666.65px" width="12" height="7" viewBox="0 0 12 7"><path d="M1 1 L6 6 L11 1" stroke="#555" stroke-width="1.2" fill="none"/></svg>
<div style="left:290px;top:658px;width:71.5px;height:26.6px;background:#fff;border:1px solid #d9d9d9;"></div>
<div style="left:294px;top:662.00px;font-size:14px;line-height:14px;color:#111;font-weight:normal;white-space:pre;">1</div>
<svg style="position:absolute;left:344.5px;top:662px" width="12" height="19" viewBox="0 0 12 19"><path d="M1.5 6 L6 1.5 L10.5 6 M1.5 13 L6 17.5 L10.5 13" stroke="#555" stroke-width="1.2" fill="none"/></svg>
<div style="left:10.5px;top:726.5px;width:399.5px;height:85.5px;border:1.3px solid #e9e9e9;border-radius:7px;background:#fff;"></div>
<div style="left:11.5px;top:727.5px;width:397.5px;height:36px;background:linear-gradient(#edf1f5,#fafbfc);border-radius:6px 6px 0 0;border-bottom:1.3px solid #e9e9e9;"></div>
<div style="left:31.59999999999991px;top:738.00px;font-size:14px;line-height:14px;color:#111;font-weight:bold;white-space:pre;letter-spacing:-0.25px;">Field Verification</div>
<svg style="position:absolute;left:389px;top:741.0px" width="10" height="10" viewBox="0 0 10 10"><path d="M0 0.5 H9.5 L4.75 9.5 Z" fill="#111"/></svg>
<svg style="position:absolute;left:32px;top:779px" width="17" height="17" viewBox="0 0 17 17"><rect x="0.75" y="0.75" width="15.5" height="15.5" fill="#fff" stroke="#333" stroke-width="1.2"/><path d="M3.5 8.5 L7 12 L13.5 4" stroke="#333" stroke-width="1.4" fill="none"/></svg>
<div style="left:56.5px;top:781.60px;font-size:14px;line-height:14px;color:#333;font-weight:normal;white-space:pre;">Verify Left Boundary</div>
<div style="left:225px;top:772px;width:178px;height:32px;border:2.6px solid #e3101c;"></div>
<svg style="position:absolute;left:232.5px;top:779px" width="17" height="17" viewBox="0 0 17 17"><rect x="0.75" y="0.75" width="15.5" height="15.5" fill="#fff" stroke="#333" stroke-width="1.2"/></svg>
<div style="left:257px;top:781.60px;font-size:14px;line-height:14px;color:#333;font-weight:normal;white-space:pre;">Verify Right Boundary</div>
</div>
<div style="left:1739px;top:982px;width:147px;height:37px;background:#c4c4c4;"></div>
<div style="left:1478px;top:993.36px;font-family:'Liberation Sans', sans-serif;font-size:14.4px;line-height:14.4px;color:#333;font-weight:normal;white-space:pre;">Project Explorer</div>
<div style="left:1615px;top:993.36px;font-family:'Liberation Sans', sans-serif;font-size:14.4px;line-height:14.4px;color:#333;font-weight:normal;white-space:pre;">Server Explorer</div>
<div style="left:1746px;top:993.36px;font-family:'Liberation Sans', sans-serif;font-size:14.4px;line-height:14.4px;color:#333;font-weight:normal;white-space:pre;">Report Properties</div>
<div style="left:39px;top:1029.99px;font-family:'Liberation Sans', sans-serif;font-size:14.6px;line-height:14.6px;color:#444;font-weight:normal;white-space:pre;">Output</div>
<div style="left:39px;top:1051px;width:47px;height:7px;background:#c2c2c2;"></div>
<div style="left:101px;top:1029.99px;font-family:'Liberation Sans', sans-serif;font-size:14.6px;line-height:14.6px;color:#444;font-weight:normal;white-space:pre;">Job Progress</div>
<div style="left:101px;top:1051px;width:83px;height:7px;background:#c2c2c2;"></div>
<div style="left:199px;top:1029.99px;font-family:'Liberation Sans', sans-serif;font-size:14.6px;line-height:14.6px;color:#444;font-weight:normal;white-space:pre;">Verify</div>
<div style="left:199px;top:1051px;width:36px;height:7px;background:#c2c2c2;"></div>
<div style="left:250px;top:1029.99px;font-family:'Liberation Sans', sans-serif;font-size:14.6px;line-height:14.6px;color:#444;font-weight:normal;white-space:pre;">Data Preview</div>
<div style="left:250px;top:1051px;width:85px;height:7px;background:#c2c2c2;"></div>
<div style="left:0px;top:1058px;width:1920px;height:1px;background:#d9d9d9;"></div>
<div style="left:0px;top:1059px;width:1920px;height:19px;background:#f0f0f0;"></div>
</body></html>
